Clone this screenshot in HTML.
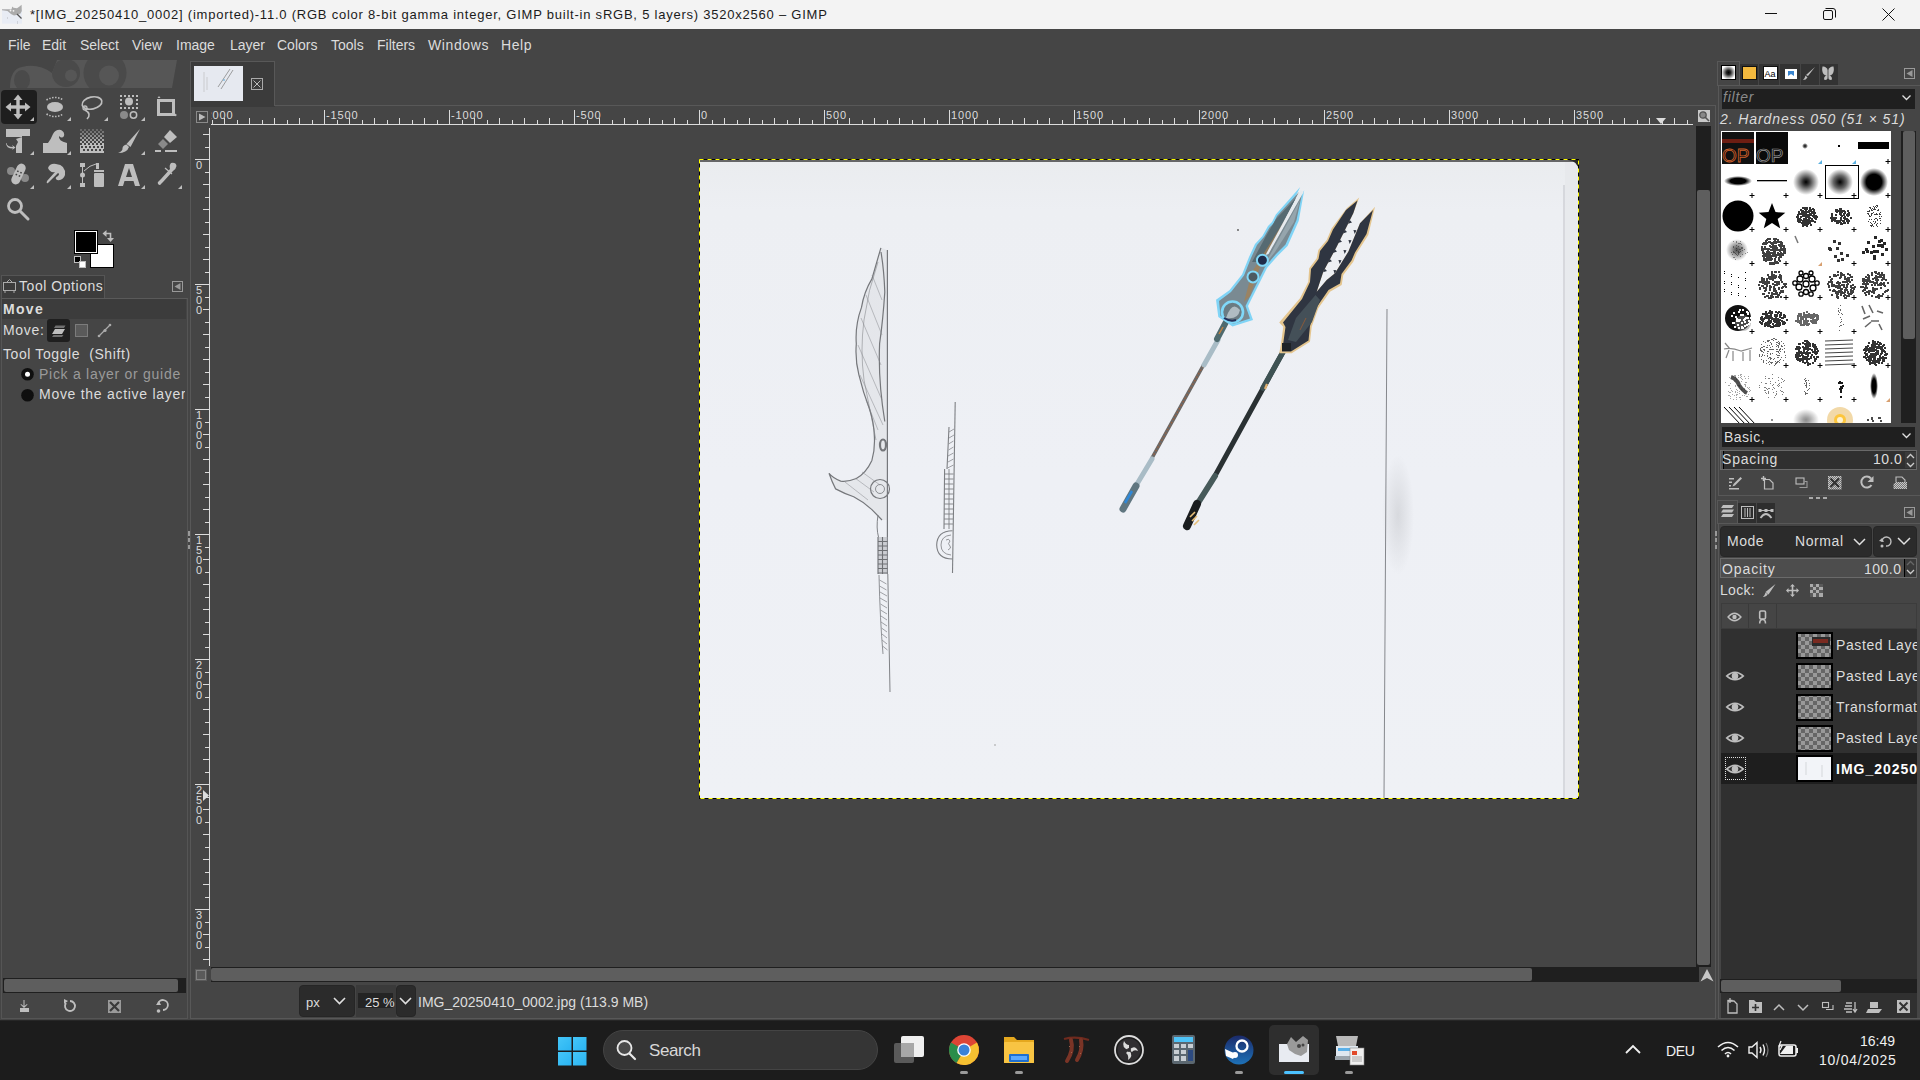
<!DOCTYPE html>
<html><head><meta charset="utf-8">
<style>
*{margin:0;padding:0;box-sizing:border-box}
html,body{width:1920px;height:1080px;overflow:hidden;background:#454545;font-family:"Liberation Sans",sans-serif;color:#dcdcdc}
.a{position:absolute}
.t{position:absolute;white-space:nowrap;line-height:1}
svg{position:absolute;overflow:visible}
.mi{position:absolute;top:38px;color:#dcdcdc;font-size:14px;line-height:1}
.ic{fill:#bebebe}
.ics{stroke:#bebebe;fill:none}
</style></head><body>
<!-- TITLE BAR -->
<div class="a" style="left:0;top:0;width:1920px;height:29px;background:#f3f3f3"></div>
<svg style="left:0;top:0" width="30" height="29" viewBox="0 0 30 29">
  <rect x="2" y="9.3" width="20" height="14.4" fill="#e8ecf4"/>
  <path d="M2 9.3 H11.5 L12.3 6.5 L13.5 7.8 L17 8.3 L19.5 6.5 L21.6 4.8 L21.8 11 L20.5 13.5 L17.5 14.8 L14 15.5 L11 14 L7.5 11 L2 10.2Z" fill="#ababab"/>
  <circle cx="10.5" cy="10.5" r="0.9" fill="#f3f3f3"/><circle cx="13.5" cy="10.8" r="0.9" fill="#f3f3f3"/>
  <path d="M17 14 L21.5 18.5" stroke="#555" stroke-width="1.3"/>
  <path d="M7.5 17 V19 M17.5 21 V24" stroke="#c8ccd2" stroke-width="0.8"/>
</svg>
<div class="t" style="left:30px;top:8px;font-size:13px;letter-spacing:0.77px;color:#1b1b1b">*[IMG_20250410_0002] (imported)-11.0 (RGB color 8-bit gamma integer, GIMP built-in sRGB, 5 layers) 3520x2560 – GIMP</div>
<div class="a" style="left:1765px;top:13px;width:12px;height:1px;background:#111"></div>
<svg style="left:1823px;top:8px" width="13" height="13" viewBox="0 0 13 13"><rect x="0.5" y="2.5" width="9" height="9" rx="1.5" fill="none" stroke="#111" stroke-width="1"/><path d="M2.5 0.5 H10 Q12.5 0.5 12.5 3 V9.5" fill="none" stroke="#111" stroke-width="1"/></svg>
<svg style="left:1882px;top:8px" width="13" height="13" viewBox="0 0 13 13"><path d="M0.5 0.5 L12.5 12.5 M12.5 0.5 L0.5 12.5" stroke="#111" stroke-width="1"/></svg>

<!-- MENU -->
<div class="mi" style="left:8px">File</div>
<div class="mi" style="left:42px">Edit</div>
<div class="mi" style="left:80px">Select</div>
<div class="mi" style="left:132px">View</div>
<div class="mi" style="left:176px">Image</div>
<div class="mi" style="left:230px">Layer</div>
<div class="mi" style="left:277px">Colors</div>
<div class="mi" style="left:331px">Tools</div>
<div class="mi" style="left:377px">Filters</div>
<div class="mi" style="left:428px;letter-spacing:0.6px">Windows</div>
<div class="mi" style="left:501px;letter-spacing:0.6px">Help</div>

<!-- LEFT TOOLBOX -->
<svg style="left:8px;top:59px" width="172" height="30" viewBox="0 0 172 30">
  <defs><clipPath id="wc"><path d="M2 29 Q2 10 14 8 Q30 4 44 14 L49 1 L169 1 L164 29 Z"/></clipPath></defs>
  <g clip-path="url(#wc)">
  <rect x="0" y="0" width="172" height="30" fill="#565656"/>
  <ellipse cx="14" cy="21" rx="8" ry="10" fill="#4a4a4a"/>
  <circle cx="58" cy="14" r="14" fill="#4a4a4a"/><circle cx="63" cy="16.5" r="6" fill="#565656"/>
  <circle cx="97" cy="14" r="21.5" fill="#4a4a4a"/><circle cx="101" cy="16.5" r="10" fill="#565656"/>
  </g>
</svg>
<div class="a" style="left:1px;top:90px;width:36px;height:34px;background:#1e1e1e;border-radius:4px"></div>
<svg style="left:0;top:0" width="188" height="300" viewBox="0 0 188 300">
 <g fill="#bebebe">
  <!-- move -->
  <rect x="16.3" y="99" width="3.4" height="16"/><rect x="10" y="105.3" width="16" height="3.4"/>
  <path d="M18 94.5 L22.5 100 H13.5Z M18 119.5 L22.5 114 H13.5Z M5.5 107 L11 102.5 V111.5Z M30.5 107 L25 102.5 V111.5Z"/>
  <path d="M30 121 L34 121 L34 117 Z"/>
  <!-- ellipse select -->
  <ellipse cx="55" cy="107" rx="8" ry="5"/>
  <path d="M46.5 100 Q55 95 63.5 100" fill="none" stroke="#bebebe" stroke-width="1.5" stroke-dasharray="1.5 1.5"/>
  <path d="M46.5 114 Q55 119 63.5 114" fill="none" stroke="#bebebe" stroke-width="1.5" stroke-dasharray="1.5 1.5"/>
  <path d="M67 121 L71 121 L71 117 Z"/>
  <!-- lasso -->
  <ellipse cx="92" cy="103" rx="10" ry="6" fill="none" stroke="#bebebe" stroke-width="1.6" transform="rotate(-12 92 103)"/>
  <circle cx="85" cy="108" r="2" fill="none" stroke="#bebebe" stroke-width="1.3"/>
  <path d="M85 110 Q92 114 87 119" fill="none" stroke="#bebebe" stroke-width="1.6"/>
  <path d="M104 121 L108 121 L108 117 Z"/>
  <!-- fuzzy select -->
  <path d="M120 95h2v2h-2zM124 95h2v2h-2zM128 95h2v2h-2zM132 95h2v2h-2zM136 95h2v2h-2zM120 99h2v2h-2zM136 99h2v2h-2zM120 103h2v2h-2zM136 103h2v2h-2zM120 107h2v2h-2zM124 107h2v2h-2zM128 107h2v2h-2zM132 107h2v2h-2zM136 107h2v2h-2z"/>
  <circle cx="129" cy="101.5" r="4"/>
  <circle cx="124" cy="115" r="4" fill="#8a8a8a"/>
  <circle cx="133.5" cy="115" r="3.2" fill="none" stroke="#bebebe" stroke-width="1.5"/>
  <path d="M141 121 L145 121 L145 117 Z"/>
  <!-- crop -->
  <path d="M157 99 H175 V116 H172 V102 H157 Z"/>
  <path d="M157 99 H160 V113 H175 V116 H157 Z"/>
  <path d="M157.5 98 L159 96 L160.5 98Z M175 113.5 L177 115 L175 116.5Z"/>
  <!-- unified transform -->
  <path d="M6 129 H30 V136 H22 V153 H16 V146 L18 142 L16 139 L22 137 H6 Z"/>
  <path d="M6.5 143 Q7 147 13 147 L12 145 L15.5 147.5 L12 150 L13 148.5 Q6 148.5 6 143Z"/>
  <path d="M30 155 L34 155 L34 151 Z"/>
  <!-- warp -->
  <path d="M43 153 V143 H48 Q51 139 53 134 Q56 129 61 130 Q65 132 64 136 Q62 139 59 136 Q58 141 67 143 V153 Z"/>
  <path d="M67 155 L71 155 L71 151 Z"/>
  <!-- paintbrush -->
  <path d="M140 129 L130.5 147 L126.5 144 Z"/>
  <path d="M126.5 144.5 L129 147 Q127 153 118 153 Q123 151 122.5 148 Q123 145 126.5 144.5Z"/>
  <path d="M141 155 L145 155 L145 151 Z"/>
  <!-- eraser -->
  <path d="M170 130 L177 137 L170 143 L164 137 Z"/>
  <path d="M163 139 L168 144 L163 149 L158 144 Z" fill="#8a8a8a"/>
  <rect x="155" y="150" width="6" height="2"/><rect x="165" y="150" width="12" height="2"/>
  <!-- heal -->
  <circle cx="11" cy="171" r="4" fill="#8a8a8a"/><circle cx="25" cy="178" r="4" fill="#8a8a8a"/>
  <rect x="14" y="163" width="9" height="22" rx="4.5" transform="rotate(25 18.5 174)"/><g fill="#454545" transform="rotate(25 18.5 174)"><rect x="16" y="171" width="1.6" height="1.6"/><rect x="19.4" y="171" width="1.6" height="1.6"/><rect x="16" y="174.6" width="1.6" height="1.6"/><rect x="19.4" y="174.6" width="1.6" height="1.6"/></g>
  <path d="M145 189 L145 185 L141 189Z M34 189 L34 185 L30 189Z M71 189 L71 185 L67 189Z M182 189 L182 185 L178 189Z"/>
  <!-- smudge -->
  <path d="M48 168 Q50 163 56 164 Q66 165 65 175 Q63 181 57 180 Q54 178 58 176 Q60 174 58 173 L48 183 Q46 184 47 181 L55 172 Q50 173 48 168Z"/>
  <!-- paths -->
  <rect x="80" y="163" width="5" height="4"/><rect x="80" y="183" width="5" height="4"/>
  <rect x="82" y="167" width="1" height="16"/><circle cx="82.5" cy="175" r="2.5"/>
  <path d="M84 171 Q90 165 96 164" fill="none" stroke="#bebebe" stroke-width="1"/>
  <rect x="96" y="163" width="3" height="6"/>
  <rect x="94" y="170" width="10" height="2"/>
  <rect x="94" y="173" width="10" height="14" rx="1"/>
  <!-- text A -->
  <path d="M125 164 H133 L140 186 H135 L133.5 181 H124.5 L123 186 H118 Z M126 177 H132 L129 168 Z" fill-rule="evenodd"/>
  <!-- color picker -->
  <path d="M171 163 Q176 162 176.5 166 Q176 169 173 171 L163 182 L161 184 Q160 186 158 184 Q157 182 159 181 L161 179 L170 169 Q169 165 171 163Z"/>
  <path d="M165 168 L172 174" stroke="#bebebe" stroke-width="1.2"/>
  <!-- zoom -->
  <circle cx="15" cy="206" r="6.5" fill="none" stroke="#bebebe" stroke-width="2.8"/>
  <path d="M20 211 L28 219" stroke="#bebebe" stroke-width="3" stroke-linecap="round"/>
 </g>
 <!-- gradient checker -->
 <g>
  <rect x="80" y="129" width="2" height="2" fill="#bebebe" fill-opacity="0.30"/><rect x="84" y="129" width="2" height="2" fill="#bebebe" fill-opacity="0.30"/><rect x="88" y="129" width="2" height="2" fill="#bebebe" fill-opacity="0.30"/><rect x="92" y="129" width="2" height="2" fill="#bebebe" fill-opacity="0.30"/><rect x="96" y="129" width="2" height="2" fill="#bebebe" fill-opacity="0.30"/><rect x="100" y="129" width="2" height="2" fill="#bebebe" fill-opacity="0.30"/><rect x="82" y="131" width="2" height="2" fill="#bebebe" fill-opacity="0.40"/><rect x="86" y="131" width="2" height="2" fill="#bebebe" fill-opacity="0.40"/><rect x="90" y="131" width="2" height="2" fill="#bebebe" fill-opacity="0.40"/><rect x="94" y="131" width="2" height="2" fill="#bebebe" fill-opacity="0.40"/><rect x="98" y="131" width="2" height="2" fill="#bebebe" fill-opacity="0.40"/><rect x="102" y="131" width="2" height="2" fill="#bebebe" fill-opacity="0.40"/><rect x="80" y="133" width="2" height="2" fill="#bebebe" fill-opacity="0.50"/><rect x="84" y="133" width="2" height="2" fill="#bebebe" fill-opacity="0.50"/><rect x="88" y="133" width="2" height="2" fill="#bebebe" fill-opacity="0.50"/><rect x="92" y="133" width="2" height="2" fill="#bebebe" fill-opacity="0.50"/><rect x="96" y="133" width="2" height="2" fill="#bebebe" fill-opacity="0.50"/><rect x="100" y="133" width="2" height="2" fill="#bebebe" fill-opacity="0.50"/><rect x="82" y="135" width="2" height="2" fill="#bebebe" fill-opacity="0.60"/><rect x="86" y="135" width="2" height="2" fill="#bebebe" fill-opacity="0.60"/><rect x="90" y="135" width="2" height="2" fill="#bebebe" fill-opacity="0.60"/><rect x="94" y="135" width="2" height="2" fill="#bebebe" fill-opacity="0.60"/><rect x="98" y="135" width="2" height="2" fill="#bebebe" fill-opacity="0.60"/><rect x="102" y="135" width="2" height="2" fill="#bebebe" fill-opacity="0.60"/><rect x="80" y="137" width="2" height="2" fill="#bebebe" fill-opacity="0.70"/><rect x="84" y="137" width="2" height="2" fill="#bebebe" fill-opacity="0.70"/><rect x="88" y="137" width="2" height="2" fill="#bebebe" fill-opacity="0.70"/><rect x="92" y="137" width="2" height="2" fill="#bebebe" fill-opacity="0.70"/><rect x="96" y="137" width="2" height="2" fill="#bebebe" fill-opacity="0.70"/><rect x="100" y="137" width="2" height="2" fill="#bebebe" fill-opacity="0.70"/><rect x="82" y="139" width="2" height="2" fill="#bebebe" fill-opacity="0.80"/><rect x="86" y="139" width="2" height="2" fill="#bebebe" fill-opacity="0.80"/><rect x="90" y="139" width="2" height="2" fill="#bebebe" fill-opacity="0.80"/><rect x="94" y="139" width="2" height="2" fill="#bebebe" fill-opacity="0.80"/><rect x="98" y="139" width="2" height="2" fill="#bebebe" fill-opacity="0.80"/><rect x="102" y="139" width="2" height="2" fill="#bebebe" fill-opacity="0.80"/><rect x="80" y="141" width="2" height="2" fill="#bebebe" fill-opacity="0.90"/><rect x="84" y="141" width="2" height="2" fill="#bebebe" fill-opacity="0.90"/><rect x="88" y="141" width="2" height="2" fill="#bebebe" fill-opacity="0.90"/><rect x="92" y="141" width="2" height="2" fill="#bebebe" fill-opacity="0.90"/><rect x="96" y="141" width="2" height="2" fill="#bebebe" fill-opacity="0.90"/><rect x="100" y="141" width="2" height="2" fill="#bebebe" fill-opacity="0.90"/><rect x="82" y="143" width="2" height="2" fill="#bebebe" fill-opacity="1.00"/><rect x="86" y="143" width="2" height="2" fill="#bebebe" fill-opacity="1.00"/><rect x="90" y="143" width="2" height="2" fill="#bebebe" fill-opacity="1.00"/><rect x="94" y="143" width="2" height="2" fill="#bebebe" fill-opacity="1.00"/><rect x="98" y="143" width="2" height="2" fill="#bebebe" fill-opacity="1.00"/><rect x="102" y="143" width="2" height="2" fill="#bebebe" fill-opacity="1.00"/><rect x="80" y="145" width="24" height="8" fill="#bebebe"/><path d="M81 146h2v2h-2zM83 149h2v2h-2zM85 146h2v2h-2zM87 149h2v2h-2zM89 146h2v2h-2zM91 149h2v2h-2zM93 146h2v2h-2zM95 149h2v2h-2zM97 146h2v2h-2zM99 149h2v2h-2zM101 146h2v2h-2zM103 149h2v2h-2z" fill="#454545"/>
 </g>
</svg>
<!-- FG/BG -->
<div class="a" style="left:90px;top:244px;width:24px;height:24px;background:#fff;border:1px solid #000"></div>
<div class="a" style="left:74px;top:230px;width:24px;height:24px;background:#000;border:1px solid #000;box-shadow:inset 0 0 0 1px #fff"></div>
<svg style="left:74px;top:228px" width="42" height="42" viewBox="74 228 42 42">
  <path d="M106 233.5 H110.5 V238" fill="none" stroke="#bebebe" stroke-width="1.6"/><path d="M102.5 233.5 L106.5 230 V237Z M110.5 242 L107 238 H114Z" fill="#bebebe"/>
  <rect x="74.5" y="256.5" width="6" height="6" fill="#000" stroke="#bebebe" stroke-width="1"/>
  <rect x="79.5" y="261.5" width="6" height="6" fill="#fff" stroke="#bebebe" stroke-width="1"/>
</svg>

<!-- Tool options tab -->
<div class="a" style="left:1px;top:275px;width:104px;height:24px;background:#3c3c3c;border:1px solid #555;border-bottom:none"></div>
<svg style="left:3px;top:279px" width="14" height="15" viewBox="0 0 14 15"><rect x="0.5" y="3.5" width="12" height="8" fill="none" stroke="#aaa"/><path d="M4 3 L6.5 0.5 L9 3 M2 12 V14 M11 12 V14" stroke="#aaa" fill="none"/></svg>
<div class="t" style="left:19px;top:279px;font-size:14px;letter-spacing:0.55px;color:#dcdcdc">Tool Options</div>
<svg style="left:172px;top:281px" width="11" height="11" viewBox="0 0 11 11"><rect x="0.5" y="0.5" width="10" height="10" fill="none" stroke="#999"/><path d="M2.5 5.5 L8.5 2 V9 Z" fill="#999"/></svg>
<div class="a" style="left:1px;top:298px;width:187px;height:721px;border:1px solid #555;border-top:1px solid #5a5a5a"></div>
<div class="a" style="left:2px;top:299px;width:184px;height:20px;background:#3c3c3c"></div>
<div class="t" style="left:3px;top:302px;font-size:14px;letter-spacing:1.3px;font-weight:bold;color:#dcdcdc">Move</div>
<div class="t" style="left:3px;top:323px;font-size:14px;letter-spacing:0.7px;color:#dcdcdc">Move:</div>
<div class="a" style="left:47px;top:319px;width:23px;height:23px;background:#1f1f1f;border-radius:3px"></div>
<svg style="left:47px;top:319px" width="70" height="23" viewBox="47 319 70 23">
  <path d="M52 334 L55 329 H65 L62 334 Z" fill="#bebebe"/>
  <path d="M54 328 L55.5 325.5 H65.5 L64 328Z M52 337 L53.5 335 H63.5 L62 337Z" fill="#707070"/>
  <rect x="75.5" y="324.5" width="12" height="12" fill="#5a5a5a" stroke="#aaa" stroke-dasharray="1 1"/>
  <path d="M99 336 L110 325" stroke="#aaa" stroke-width="1.2"/>
  <circle cx="99" cy="336" r="1.3" fill="#aaa"/><circle cx="105" cy="330.5" r="1.6" fill="#aaa"/><circle cx="110" cy="325" r="1.3" fill="#aaa"/>
</svg>
<div class="t" style="left:3px;top:347px;font-size:14px;letter-spacing:0.6px;color:#dcdcdc">Tool Toggle&nbsp; (Shift)</div>
<svg style="left:20px;top:367px" width="16" height="36" viewBox="20 367 16 36">
  <circle cx="27.5" cy="374.2" r="6.3" fill="#0f0f0f"/><circle cx="27.5" cy="374.2" r="2.5" fill="#fff"/>
  <circle cx="27.5" cy="395.3" r="6.3" fill="#0f0f0f"/>
</svg>
<div class="t" style="left:39px;top:367px;font-size:14px;letter-spacing:0.72px;color:#9a9a9a">Pick a layer or guide</div>
<div class="a" style="left:39px;top:385px;width:146px;height:20px;overflow:hidden"><div class="t" style="left:0;top:2px;font-size:14px;letter-spacing:0.72px;color:#dcdcdc">Move the active layer</div></div>

<!-- left panel bottom -->
<div class="a" style="left:3px;top:978px;width:183px;height:15px;background:#1f1f1f"></div>
<div class="a" style="left:4px;top:979px;width:174px;height:13px;background:#5e5e5e;border-radius:2px"></div>
<svg style="left:0;top:995px" width="188" height="22" viewBox="0 995 188 22">
  <g fill="#bebebe">
   <path d="M23.5 1000 V1006 L21 1004 L20.5 1004.5 L24 1008 L27.5 1004.5 L27 1004 L24.5 1006 V1000 Z"/>
   <path d="M20 1008 H29 V1012 H20Z"/>
  </g>
  <path d="M66 1003 A5 5 0 1 0 70 1001" fill="none" stroke="#bebebe" stroke-width="1.8"/>
  <path d="M64 999 L68 1001 L64 1004Z" fill="#bebebe"/>
  <rect x="108" y="1000" width="13" height="13" fill="#9a9a9a"/>
  <path d="M110 1002 L119 1011 M119 1002 L110 1011" stroke="#3a3a3a" stroke-width="2.2"/>
  <path d="M158 1004 A5 5 0 1 1 163 1010" fill="none" stroke="#bebebe" stroke-width="1.8"/>
  <path d="M156 1005 L159 1001 L161 1005Z" fill="#bebebe"/><circle cx="158.5" cy="1011" r="1.8" fill="#bebebe"/>
</svg>
<!-- CANVAS NOTEBOOK -->
<div class="a" style="left:190px;top:105px;width:1526px;height:914px;border:1px solid #585858"></div>
<div class="a" style="left:190px;top:61px;width:85px;height:46px;background:#3b3b3b;border:1px solid #585858;border-bottom:none"></div>
<div class="a" style="left:194px;top:66px;width:49px;height:35px;background:#e6e9f0"></div>
<svg style="left:194px;top:66px" width="49" height="35" viewBox="0 0 49 35">
  <path d="M10 6 V26 M13 11 V24" stroke="#bbb" stroke-width="0.6"/>
  <path d="M36 3 L24 21 M39 4 L27 23" stroke="#888" stroke-width="0.8"/>
  <circle cx="30" cy="14" r="0.8" fill="#4aa3d8"/>
</svg>
<svg style="left:251px;top:78px" width="12" height="12" viewBox="0 0 12 12"><rect x="0.5" y="0.5" width="11" height="11" fill="none" stroke="#aaa"/><path d="M2.5 2.5 L9.5 9.5 M9.5 2.5 L2.5 9.5" stroke="#bbb" stroke-width="1"/></svg>
<div class="a" style="left:191px;top:106px;width:84px;height:1px;background:#3b3b3b"></div>
<svg style="left:196px;top:111px" width="12" height="12" viewBox="0 0 12 12"><rect x="0.5" y="0.5" width="11" height="11" fill="none" stroke="#8a8a8a"/><path d="M3 2.5 L9.5 6 L3 9.5Z" fill="#bbb"/></svg>
<svg style="left:211px;top:106px;overflow:hidden" width="1483" height="20" viewBox="211 106 1483 20">
<rect x="210" y="124" width="1483" height="1" fill="#dcdcdc"/>
<path d="M212.5 120V124M224.5 118V124M237.5 120V124M249.5 118V124M262.5 120V124M274.5 118V124M287.5 120V124M299.5 118V124M312.5 120V124M324.5 110V124M337.5 120V124M349.5 118V124M362.5 120V124M374.5 118V124M387.5 120V124M399.5 118V124M412.5 120V124M424.5 118V124M437.5 120V124M449.5 110V124M462.5 120V124M474.5 118V124M487.5 120V124M499.5 118V124M512.5 120V124M524.5 118V124M537.5 120V124M549.5 118V124M562.5 120V124M574.5 110V124M587.5 120V124M599.5 118V124M612.5 120V124M624.5 118V124M637.5 120V124M649.5 118V124M662.5 120V124M674.5 118V124M687.5 120V124M699.5 110V124M712.5 120V124M724.5 118V124M737.5 120V124M749.5 118V124M762.5 120V124M774.5 118V124M787.5 120V124M799.5 118V124M812.5 120V124M824.5 110V124M837.5 120V124M849.5 118V124M862.5 120V124M874.5 118V124M887.5 120V124M899.5 118V124M912.5 120V124M924.5 118V124M937.5 120V124M949.5 110V124M962.5 120V124M974.5 118V124M987.5 120V124M999.5 118V124M1012.5 120V124M1024.5 118V124M1037.5 120V124M1049.5 118V124M1062.5 120V124M1074.5 110V124M1087.5 120V124M1099.5 118V124M1112.5 120V124M1124.5 118V124M1137.5 120V124M1149.5 118V124M1162.5 120V124M1174.5 118V124M1187.5 120V124M1199.5 110V124M1212.5 120V124M1224.5 118V124M1237.5 120V124M1249.5 118V124M1262.5 120V124M1274.5 118V124M1287.5 120V124M1299.5 118V124M1312.5 120V124M1324.5 110V124M1337.5 120V124M1349.5 118V124M1362.5 120V124M1374.5 118V124M1387.5 120V124M1399.5 118V124M1412.5 120V124M1424.5 118V124M1437.5 120V124M1449.5 110V124M1462.5 120V124M1474.5 118V124M1487.5 120V124M1499.5 118V124M1512.5 120V124M1524.5 118V124M1537.5 120V124M1549.5 118V124M1562.5 120V124M1574.5 110V124M1587.5 120V124M1599.5 118V124M1612.5 120V124M1624.5 118V124M1637.5 120V124M1649.5 118V124M1662.5 120V124M1674.5 118V124M1687.5 120V124" stroke="#dcdcdc" stroke-width="1"/>
<text x="201.0" y="119" font-size="11" letter-spacing="0.9" fill="#dcdcdc" font-family="Liberation Sans">-2000</text>
<text x="326.0" y="119" font-size="11" letter-spacing="0.9" fill="#dcdcdc" font-family="Liberation Sans">-1500</text>
<text x="451.0" y="119" font-size="11" letter-spacing="0.9" fill="#dcdcdc" font-family="Liberation Sans">-1000</text>
<text x="576.0" y="119" font-size="11" letter-spacing="0.9" fill="#dcdcdc" font-family="Liberation Sans">-500</text>
<text x="701.0" y="119" font-size="11" letter-spacing="0.9" fill="#dcdcdc" font-family="Liberation Sans">0</text>
<text x="826.0" y="119" font-size="11" letter-spacing="0.9" fill="#dcdcdc" font-family="Liberation Sans">500</text>
<text x="951.0" y="119" font-size="11" letter-spacing="0.9" fill="#dcdcdc" font-family="Liberation Sans">1000</text>
<text x="1076.0" y="119" font-size="11" letter-spacing="0.9" fill="#dcdcdc" font-family="Liberation Sans">1500</text>
<text x="1201.0" y="119" font-size="11" letter-spacing="0.9" fill="#dcdcdc" font-family="Liberation Sans">2000</text>
<text x="1326.0" y="119" font-size="11" letter-spacing="0.9" fill="#dcdcdc" font-family="Liberation Sans">2500</text>
<text x="1451.0" y="119" font-size="11" letter-spacing="0.9" fill="#dcdcdc" font-family="Liberation Sans">3000</text>
<text x="1576.0" y="119" font-size="11" letter-spacing="0.9" fill="#dcdcdc" font-family="Liberation Sans">3500</text>
<path d="M1656 118 L1666 118 L1661 124Z" fill="#dcdcdc"/>
</svg>
<svg style="left:191px;top:126px;overflow:hidden" width="19" height="840" viewBox="191 126 19 840">
<rect x="209" y="128" width="1" height="838" fill="#dcdcdc"/>
<path d="M203 134.5H209M205 147.5H209M195 159.5H209M205 172.5H209M203 184.5H209M205 197.5H209M203 209.5H209M205 222.5H209M203 234.5H209M205 247.5H209M203 259.5H209M205 272.5H209M195 284.5H209M205 297.5H209M203 309.5H209M205 322.5H209M203 334.5H209M205 347.5H209M203 359.5H209M205 372.5H209M203 384.5H209M205 397.5H209M195 409.5H209M205 422.5H209M203 434.5H209M205 447.5H209M203 459.5H209M205 472.5H209M203 484.5H209M205 497.5H209M203 509.5H209M205 522.5H209M195 534.5H209M205 547.5H209M203 559.5H209M205 572.5H209M203 584.5H209M205 597.5H209M203 609.5H209M205 622.5H209M203 634.5H209M205 647.5H209M195 659.5H209M205 672.5H209M203 684.5H209M205 697.5H209M203 709.5H209M205 722.5H209M203 734.5H209M205 747.5H209M203 759.5H209M205 772.5H209M195 784.5H209M205 797.5H209M203 809.5H209M205 822.5H209M203 834.5H209M205 847.5H209M203 859.5H209M205 872.5H209M203 884.5H209M205 897.5H209M195 909.5H209M205 922.5H209M203 934.5H209M205 947.5H209M203 959.5H209" stroke="#dcdcdc" stroke-width="1"/>
<text x="196" y="169.0" font-size="11" fill="#dcdcdc" font-family="Liberation Sans">0</text>
<text x="196" y="294.0" font-size="11" fill="#dcdcdc" font-family="Liberation Sans">5</text>
<text x="196" y="304.0" font-size="11" fill="#dcdcdc" font-family="Liberation Sans">0</text>
<text x="196" y="314.0" font-size="11" fill="#dcdcdc" font-family="Liberation Sans">0</text>
<text x="196" y="419.0" font-size="11" fill="#dcdcdc" font-family="Liberation Sans">1</text>
<text x="196" y="429.0" font-size="11" fill="#dcdcdc" font-family="Liberation Sans">0</text>
<text x="196" y="439.0" font-size="11" fill="#dcdcdc" font-family="Liberation Sans">0</text>
<text x="196" y="449.0" font-size="11" fill="#dcdcdc" font-family="Liberation Sans">0</text>
<text x="196" y="544.0" font-size="11" fill="#dcdcdc" font-family="Liberation Sans">1</text>
<text x="196" y="554.0" font-size="11" fill="#dcdcdc" font-family="Liberation Sans">5</text>
<text x="196" y="564.0" font-size="11" fill="#dcdcdc" font-family="Liberation Sans">0</text>
<text x="196" y="574.0" font-size="11" fill="#dcdcdc" font-family="Liberation Sans">0</text>
<text x="196" y="669.0" font-size="11" fill="#dcdcdc" font-family="Liberation Sans">2</text>
<text x="196" y="679.0" font-size="11" fill="#dcdcdc" font-family="Liberation Sans">0</text>
<text x="196" y="689.0" font-size="11" fill="#dcdcdc" font-family="Liberation Sans">0</text>
<text x="196" y="699.0" font-size="11" fill="#dcdcdc" font-family="Liberation Sans">0</text>
<text x="196" y="794.0" font-size="11" fill="#dcdcdc" font-family="Liberation Sans">2</text>
<text x="196" y="804.0" font-size="11" fill="#dcdcdc" font-family="Liberation Sans">5</text>
<text x="196" y="814.0" font-size="11" fill="#dcdcdc" font-family="Liberation Sans">0</text>
<text x="196" y="824.0" font-size="11" fill="#dcdcdc" font-family="Liberation Sans">0</text>
<text x="196" y="919.0" font-size="11" fill="#dcdcdc" font-family="Liberation Sans">3</text>
<text x="196" y="929.0" font-size="11" fill="#dcdcdc" font-family="Liberation Sans">0</text>
<text x="196" y="939.0" font-size="11" fill="#dcdcdc" font-family="Liberation Sans">0</text>
<text x="196" y="949.0" font-size="11" fill="#dcdcdc" font-family="Liberation Sans">0</text>
<path d="M203 790 L203 801 L209 795.5Z" fill="#dcdcdc"/>
</svg><!-- zoom button -->
<div class="a" style="left:1698px;top:110px;width:12px;height:12px;background:#c8c8c8"></div>
<svg style="left:1698px;top:110px" width="12" height="12" viewBox="0 0 12 12"><circle cx="5" cy="5" r="3.2" fill="#888" stroke="#555" stroke-width="1.3"/><path d="M7.5 7.5 L11 11" stroke="#555" stroke-width="1.6"/></svg>
<!-- v scrollbar -->
<div class="a" style="left:1696px;top:126px;width:15px;height:841px;background:#1f1f1f"></div>
<div class="a" style="left:1697px;top:190px;width:13px;height:775px;background:#5e5e5e;border-radius:2px"></div>
<!-- h scrollbar -->
<div class="a" style="left:211px;top:967px;width:488px;height:15px;background:#1f1f1f"></div>
<div class="a" style="left:699px;top:967px;width:1000px;height:15px;background:#1f1f1f"></div>
<div class="a" style="left:211px;top:968px;width:1321px;height:13px;background:#5e5e5e;border-radius:2px"></div>
<svg style="left:195px;top:969px" width="12" height="12" viewBox="0 0 12 12"><rect x="0" y="0" width="12" height="12" fill="#5a5a5a"/><rect x="1.5" y="1.5" width="9" height="9" fill="none" stroke="#aaa" stroke-dasharray="1 1"/></svg>
<svg style="left:1700px;top:969px" width="14" height="13" viewBox="0 0 14 13"><path d="M7 0 L13.5 12.5 L7 9 L0.5 12.5Z" fill="#c8c8c8"/></svg>
<!-- status bar -->
<div class="a" style="left:299px;top:985px;width:56px;height:32px;background:#2b2b2b;border-radius:4px;border:1px solid #262626"></div>
<div class="t" style="left:306px;top:996px;font-size:13px;color:#dcdcdc">px</div>
<svg style="left:333px;top:997px" width="13" height="8" viewBox="0 0 13 8"><path d="M1 1 L6.5 6.5 L12 1" fill="none" stroke="#e0e0e0" stroke-width="1.6"/></svg>
<div class="a" style="left:356px;top:985px;width:40px;height:32px;background:#3a3a3a"></div>
<div class="a" style="left:358px;top:993px;width:35px;height:15px;background:#242424"></div>
<div class="t" style="left:365px;top:996px;font-size:13px;color:#dcdcdc">25 %</div>
<div class="a" style="left:396px;top:985px;width:20px;height:32px;background:#2b2b2b;border-radius:4px;border:1px solid #262626"></div>
<svg style="left:399px;top:997px" width="13" height="8" viewBox="0 0 13 8"><path d="M1 1 L6.5 6.5 L12 1" fill="none" stroke="#e0e0e0" stroke-width="1.6"/></svg>
<div class="t" style="left:418px;top:995px;font-size:14px;color:#dcdcdc">IMG_20250410_0002.jpg (113.9 MB)</div>
<!-- IMAGE -->
<svg style="left:699px;top:159px" width="881" height="641" viewBox="699 159 881 641">
 <defs>
  <linearGradient id="pg" x1="0" y1="0" x2="0" y2="1">
   <stop offset="0" stop-color="#eaecef"/><stop offset="0.08" stop-color="#edeff3"/><stop offset="0.5" stop-color="#eef0f5"/><stop offset="1" stop-color="#eff1f5"/>
  </linearGradient>
 </defs>
 <rect x="700" y="160" width="879" height="639" fill="url(#pg)"/>
 <rect x="700" y="160" width="878" height="2" fill="#3a3a3a" opacity="0.75"/>
 <path d="M1564 185 V798" stroke="#cfd1d6" stroke-width="1.5"/>
 <path d="M1384 798 L1387 309" stroke="#85878c" stroke-width="1"/>
 <defs><radialGradient id="smg"><stop offset="0" stop-color="#9a9ca0" stop-opacity="0.45"/><stop offset="1" stop-color="#9a9ca0" stop-opacity="0"/></radialGradient></defs><ellipse cx="1398" cy="515" rx="16" ry="60" fill="url(#smg)" opacity="0.6"/><rect x="1565" y="162" width="13" height="636" fill="#e4e6ea" opacity="0.6"/>
 <!-- sketch 1 blade -->
 <path d="M880.9 247.8 L871.9 278.9 Q864 292 861.5 307.4 Q855 325 856.3 343.7 Q855 360 858.9 374.8 Q863 392 869.3 408.5 Q874 422 874.4 437 Q875 450 871.9 460.4 Q866 473 856.3 478.5 Q848 482 840.7 481.1 Q833 478 829 473.3 Q832 482 835.6 488.9 Q845 494 853.7 496.7 Q864 502 871.9 509.6 L882 520 L887 520 L887 250 Z" fill="#d9dbdf" opacity="0.45"/>
 <g fill="none" stroke="#75777b" stroke-width="1.2">
  <path d="M887.4 250 V574"/>
  <path d="M880.9 247.8 L871.9 278.9 Q864 292 861.5 307.4 Q855 325 856.3 343.7 Q855 360 858.9 374.8 Q863 392 869.3 408.5 Q874 422 874.4 437 Q875 450 871.9 460.4 Q866 473 856.3 478.5 Q848 482 840.7 481.1 Q833 478 829 473.3 Q832 482 835.6 488.9 Q845 494 853.7 496.7 Q864 502 871.9 509.6 L882 520"/>
  <path d="M881 252 Q884 270 884.8 291.9 Q883 320 879.6 343.7 Q878 380 884.8 421.5"/>
  <path d="M878 262 Q868 290 864 320 Q860 350 864 380 Q870 410 876 440" stroke-width="0.7" opacity="0.7"/>
  <ellipse cx="883" cy="445" rx="3" ry="5.5" stroke-width="2.2"/>
  <circle cx="880" cy="489" r="9.5"/><circle cx="880" cy="489" r="4.5" stroke-width="0.8"/>
     </g>
 <g stroke="#85878b" stroke-width="0.6" opacity="0.8">
  <path d="M872 275 L882 300 M866 295 L882 335 M861 318 L881 365 M858 345 L882 400 M860 375 L883 425 M866 400 L878 430 M845 482 L868 500 M855 478 L874 492 M862 472 L880 485"/>
 </g>
 <path d="M878 515 Q876 528 878.5 537" fill="none" stroke="#808286" stroke-width="1"/>
 <rect x="878" y="537" width="9.5" height="37" fill="#b4b6ba" opacity="0.6"/>
 <path d="M878 537 V574 M882.5 537 V574 M878 541.5h9.5M878 546h9.5M878 550.5h9.5M878 555h9.5M878 559.5h9.5M878 564h9.5M878 568.5h9.5M878 573h9.5" stroke="#6e7074" stroke-width="1.1" fill="none"/>
 <path d="M879 575 Q880 620 883 654" fill="none" stroke="#85878b" stroke-width="0.9"/>
 <path d="M879.5 580l7 4M879.5 586l7 4M880 592l7 4M880 598l7 4M880.5 604l6.5 4M880.5 610l6.5 4M881 616l6 4M881 622l6 4M881.5 628l5.5 4M882 634l5 4M882 640l5 4M882.5 646l5 4" stroke="#8a8c90" stroke-width="0.8"/>
 <path d="M887.8 574 L890 692" fill="none" stroke="#808286" stroke-width="1"/>
 <!-- sketch 2 -->
 <g fill="none" stroke="#7d7f83" stroke-width="1.1">
  <path d="M955.2 402 L952.5 573"/>
  <path d="M949 427 L947 469 M944.6 469 L944 529"/>
  <path d="M952.5 530.7 Q937 531 936.7 545 Q937 559 952.5 559"/>
  <path d="M951 535 Q941 536 941 545 Q941 554 951 555" stroke-width="0.8"/>
  <path d="M946 540 q3 -2 4 1 q-3 3 0 5 q2 2 -2 4" stroke-width="0.8"/>
 </g>
 <path d="M949 432l5 -3M949 438l5 -3M948.5 444l5 -3M948.5 450l5 -3M948 456l5.5 -3M948 462l5.5 -3M947.5 468l6 -3" stroke="#8a8c90" stroke-width="0.8"/>
 <path d="M944.5 474h9M944.5 479h9M944.5 484h9M944.5 489h9M944.5 494h9M944.3 499h9M944.3 504h9M944.2 509h9M944.2 514h9M944.1 519h9M944 524h9M949 469V529" stroke="#7d7f83" stroke-width="0.9"/>
 <circle cx="995" cy="745" r="0.8" fill="#999"/>
 <circle cx="1238" cy="230" r="0.9" fill="#555"/>
 <!-- BLUE SPEAR -->
 <g>
  <path d="M1203 366 L1152 458" stroke="#6b6866" stroke-width="3.6" stroke-linecap="round"/>
  <path d="M1203 366 L1152 458" stroke="#9a6040" stroke-width="1.4" stroke-dasharray="1.5 2.5"/>
  <path d="M1218 340 L1204 365" stroke="#a9bcc6" stroke-width="5" stroke-linecap="round"/>
  <path d="M1152 459 L1137 484" stroke="#a9bcc6" stroke-width="5" stroke-linecap="round"/>
  <path d="M1136 486 L1123 509" stroke="#607680" stroke-width="7" stroke-linecap="round"/>
  <path d="M1132 491 L1125 503" stroke="#2f88d8" stroke-width="2.5"/>
  <path d="M1226 322 L1217 339" stroke="#4f6a6e" stroke-width="6" stroke-linecap="round"/><path d="M1223 327 L1219 334" stroke="#c08040" stroke-width="1.5"/>
  <path d="M1300.2 187.1 L1275.8 214.6 L1272 222 L1268 226 L1262.4 235.9 L1255 244 L1249 257 L1242 274.5 L1229.4 290.2 L1216 299.7 L1218.3 317 L1232.5 326.5 L1253 320 L1248 306 L1256 290 L1267 268 L1278 255.6 L1287.6 246 L1298.7 221 L1304.2 190.2 L1266 258 Z" fill="#80d4f6"/>
  <path d="M1299 192 L1277 216 L1273.5 223.5 L1269.5 227.5 L1264 237 L1257 245 L1251 258 L1244 275.5 L1231 292 L1219 301 L1220.5 316 L1233 324 L1250 318.5 L1245.5 306 L1254 289 L1265 267 L1276 254 L1285.5 244.5 L1296.5 220 L1302 194 L1266 257 Z" fill="#7a8a92"/>
  <path d="M1296 198 L1267 252 L1260 262 L1252 262 L1266 236 L1276 219 Z" fill="#566a72"/>
  <path d="M1293 207 L1264 258 L1258 272 L1250 296 L1244 302 L1252 272 Z" fill="#a88050" opacity="0.7"/>
  <path d="M1300 200 L1270 255 L1264 266 L1275 252 L1294 222Z" fill="#95a5ad"/>
  <path d="M1300.8 190 L1303.6 192 L1268.5 254 L1265.5 255Z" fill="#e6eaee"/>
  <circle cx="1232.5" cy="312" r="10.5" fill="#6b7b82" stroke="#80d8f8" stroke-width="2.6"/>
  <path d="M1226 318 Q1232 300 1240 310 Q1238 320 1226 318Z" fill="#b0bcc2"/>
  <path d="M1224 318 Q1230 322 1236 320" stroke="#24305a" stroke-width="2" fill="none"/>
  <circle cx="1262.4" cy="260.3" r="5.5" fill="#1f2c4a" stroke="#80d8f8" stroke-width="2"/>
  <circle cx="1253" cy="276.9" r="5.5" fill="#4d5a60" stroke="#80d8f8" stroke-width="2"/>
 </g>
 <!-- DARK SPEAR -->
 <g>
  <path d="M1283 352 L1216 474" stroke="#2a3133" stroke-width="5" stroke-linecap="round"/>
  <path d="M1283 352 L1263 388" stroke="#3e5253" stroke-width="5.5" stroke-linecap="round"/>
  <path d="M1215 476 L1198 503" stroke="#475a5a" stroke-width="6" stroke-linecap="round"/>
  <path d="M1197 504 L1187 526" stroke="#1a1d1f" stroke-width="8" stroke-linecap="round"/>
  <path d="M1190 517 L1195 512 M1192 521 L1197 516 M1194 525 L1199 520" stroke="#e8c07a" stroke-width="1.6"/>
  <path d="M1265 389 L1267 384" stroke="#e0b070" stroke-width="2.2"/>
  <path d="M1359.2 197.5 L1346.7 208.3 L1331.7 228.3 L1326.7 240 L1318.3 250 L1316.7 258.3 L1309.2 268.3 L1308.3 281.7 L1300 298.3 L1279.2 322.5 L1283.3 326.7 L1280.8 345 L1279.2 353.3 L1291.7 353.3 L1310 341.7 L1311.7 326.7 L1318.3 308.3 L1330 291.7 L1341.7 285 L1343.3 275 L1353.3 261.7 L1356.7 253.3 L1368.3 235 L1375 206.7 L1360 223.3 L1348.3 251.7 L1335 273.3 L1326.7 280 L1316.7 291.7 L1323.3 271.7 L1336.7 246.7 L1353.3 213.3 Z" fill="#e4c58e"/>
  <path d="M1357.5 200.5 L1346 210 L1333 229.5 L1328 241 L1320 251 L1318.5 259 L1311 269 L1310 282 L1302 299 L1283 322.5 L1285.5 327 L1283 345 L1282 351.5 L1291 351.5 L1308.5 340.5 L1310 326 L1316.5 307.5 L1328.5 290 L1340 283.5 L1341.5 274 L1351.5 260.5 L1355 252.5 L1366.5 234 L1373 210 L1360 223.3 L1348.3 251.7 L1335 273.3 L1326.7 280 L1316.7 291.7 L1323.3 271.7 L1336.7 246.7 L1353.3 213.3 Z" fill="#2f3541"/>
  <path d="M1349.8 220.1L1348.0 223.7L1352.0 222.4ZM1344.8 229.8L1343.0 233.4L1347.0 232.1ZM1339.8 239.6L1338.0 243.1L1342.0 241.8ZM1334.8 249.3L1333.0 252.9L1337.0 251.6ZM1329.8 259.0L1328.0 262.6L1332.0 261.3ZM1324.8 268.8L1323.0 272.3L1327.0 271.0ZM1356.5 230.3L1354.7 233.9L1353.4 229.9ZM1351.5 240.3L1349.7 243.9L1348.4 239.9ZM1346.5 250.3L1344.7 253.9L1343.4 249.9ZM1341.5 260.3L1339.7 263.9L1338.4 259.9ZM1336.5 270.3L1334.7 273.9L1333.4 269.9Z" fill="#2f3541"/>
  <path d="M1315.5 295 L1296 318 L1288 340 L1296 342 L1312 322 L1320 300Z" fill="#445058"/>
  <path d="M1300 330 L1306 318" stroke="#8a5a3a" stroke-width="1"/>
  <rect x="1282" y="343" width="9" height="8" fill="#1e2226"/>
 </g>
 <path d="M1568 160 H1579 V171 Q1578 161 1568 160Z" fill="#2a2a2a"/>
 <!-- dashed border -->
 <rect x="699.5" y="159.5" width="879" height="639" fill="none" stroke="#000" stroke-width="1"/>
 <rect x="699.5" y="159.5" width="879" height="639" fill="none" stroke="#ffff00" stroke-width="1" stroke-dasharray="4 4"/>
</svg>
<!-- RIGHT DOCK: BRUSHES -->
<div class="a" style="left:1717px;top:61px;width:23px;height:25px;background:#454545;border:1px solid #585858;border-bottom:none"></div>
<div class="a" style="left:1740px;top:64px;width:98px;height:21px;background:#333"></div>
<div class="a" style="left:1758px;top:64px;width:1px;height:21px;background:#454545"></div>
<div class="a" style="left:1779px;top:64px;width:1px;height:21px;background:#454545"></div>
<div class="a" style="left:1800px;top:64px;width:1px;height:21px;background:#454545"></div>
<div class="a" style="left:1819px;top:64px;width:1px;height:21px;background:#454545"></div>
<svg style="left:1717px;top:61px" width="130" height="25" viewBox="1717 61 130 25">
  <defs><radialGradient id="tg"><stop offset="0" stop-color="#000"/><stop offset="0.3" stop-color="#222"/><stop offset="1" stop-color="#fff"/></radialGradient></defs>
  <rect x="1721.5" y="65.5" width="14" height="14" fill="url(#tg)" stroke="#000"/>
  <rect x="1742.5" y="66.5" width="14" height="13" fill="#f3b93e" stroke="#111"/>
  <rect x="1763.5" y="66.5" width="14" height="13" fill="#fff" stroke="#111"/>
  <text x="1764.5" y="77" font-size="9" fill="#000" font-family="Liberation Sans">Aa</text>
  <rect x="1785" y="69" width="12" height="10" fill="#fff"/><path d="M1788 71 H1794 V76 L1791 74 L1788 76Z" fill="#3a86d0"/>
  <path d="M1815 67 L1808 76 L1806 75Z M1805.5 75.5 L1807.5 77.5 Q1806 80 1803 80 Q1805 78 1805.5 75.5Z" fill="#bebebe"/>
  <path d="M1828 70 Q1826 66 1822.5 66.5 Q1821.5 71 1823.5 74 Q1825 75.5 1826.5 75.5 Q1823 77 1824.5 80 Q1827 80.5 1828 77.5 Q1829 80.5 1831.5 80 Q1833 77 1829.5 75.5 Q1831 75.5 1832.5 74 Q1834.5 71 1833.5 66.5 Q1830 66 1828 70Z" fill="#bebebe"/><path d="M1828 69 V78" stroke="#333" stroke-width="0.8"/>
</svg>
<svg style="left:1904px;top:68px" width="11" height="11" viewBox="0 0 11 11"><rect x="0.5" y="0.5" width="10" height="10" fill="none" stroke="#999"/><path d="M2.5 5.5 L8.5 2 V9 Z" fill="#999"/></svg>
<div class="a" style="left:1718px;top:85px;width:202px;height:411px;border:1px solid #585858;border-right:none"></div>
<div class="a" style="left:1722px;top:89px;width:193px;height:20px;background:#1f1f1f"></div>
<div class="t" style="left:1723px;top:90px;font-size:14px;letter-spacing:0.8px;font-style:italic;color:#8a8a8a">filter</div>
<svg style="left:1902px;top:95px" width="9" height="6" viewBox="0 0 9 6"><path d="M0.5 0.5 L4.5 4.5 L8.5 0.5" fill="none" stroke="#e0e0e0" stroke-width="1.3"/></svg>
<div class="t" style="left:1720px;top:112px;font-size:14px;letter-spacing:0.9px;font-style:italic;color:#dcdcdc">2. Hardness 050 (51 × 51)</div>
<svg style="left:1721px;top:131px;overflow:hidden" width="170" height="292" viewBox="1721 131 170 292">
<defs><radialGradient id="b1"><stop offset="0" stop-color="#000"/><stop offset="0.25" stop-color="#000" stop-opacity="0.8"/><stop offset="1" stop-color="#000" stop-opacity="0"/></radialGradient><radialGradient id="b2"><stop offset="0" stop-color="#000"/><stop offset="0.5" stop-color="#000" stop-opacity="0.6"/><stop offset="1" stop-color="#000" stop-opacity="0"/></radialGradient><radialGradient id="b3"><stop offset="0" stop-color="#000"/><stop offset="0.55" stop-color="#000"/><stop offset="1" stop-color="#000" stop-opacity="0"/></radialGradient></defs>
<rect x="1721" y="131" width="170" height="292" fill="#fff"/>
<rect x="1722" y="132" width="32" height="32" fill="#111"/><rect x="1722" y="139" width="32" height="4" fill="#6d1d12"/><text x="1722" y="162" font-size="19" fill="none" stroke="#d0602a" stroke-width="0.8" font-family="Liberation Sans">OP</text>
<rect x="1756" y="132" width="32" height="32" fill="#0a0a0a"/><text x="1756" y="162" font-size="19" fill="none" stroke="#999" stroke-width="0.7" font-family="Liberation Sans">OP</text>
<circle cx="1805" cy="146" r="3" fill="url(#b2)"/>
<rect x="1838" y="145" width="2" height="2" fill="#000"/>
<rect x="1858" y="142" width="31" height="7" fill="#000"/>
<ellipse cx="1738" cy="181" rx="14" ry="5" fill="url(#b3)"/>
<rect x="1757" y="180" width="30" height="1.3" fill="#000"/>
<circle cx="1806" cy="182" r="13" fill="url(#b1)"/>
<circle cx="1840" cy="182" r="13" fill="url(#b2)"/><rect x="1825.5" y="165.5" width="33" height="33" fill="none" stroke="#000" stroke-width="1"/>
<circle cx="1874" cy="182" r="14" fill="url(#b3)"/>
<circle cx="1738" cy="216" r="15.5" fill="#000"/>
<polygon points="1772.0,203.0 1775.5,212.1 1785.3,212.7 1777.7,218.9 1780.2,228.3 1772.0,223.0 1763.8,228.3 1766.3,218.9 1758.7,212.7 1768.5,212.1" fill="#000"/>
<path d="M1807 223h2v2h-2zM1801 222h2v2h-2zM1804 214h2v2h-2zM1815 217h2v2h-2zM1806 221h2v2h-2zM1813 216h2v2h-2zM1810 210h2v2h-2zM1804 213h2v2h-2zM1800 209h2v2h-2zM1797 215h2v2h-2zM1805 214h2v2h-2zM1806 208h2v2h-2zM1805 218h2v2h-2zM1811 211h2v2h-2zM1804 207h2v2h-2zM1804 207h2v2h-2zM1799 221h2v2h-2zM1797 219h2v2h-2zM1808 214h2v2h-2zM1809 220h2v2h-2zM1812 215h2v2h-2zM1802 212h2v2h-2zM1800 216h2v2h-2zM1801 222h2v2h-2zM1798 211h2v2h-2zM1802 207h2v2h-2zM1812 208h2v2h-2zM1804 212h2v2h-2zM1812 208h2v2h-2zM1812 212h2v2h-2zM1805 212h2v2h-2zM1810 209h2v2h-2zM1805 218h2v2h-2zM1812 208h2v2h-2zM1814 221h2v2h-2zM1803 218h2v2h-2zM1804 224h2v2h-2zM1807 214h2v2h-2zM1804 215h2v2h-2zM1805 210h2v2h-2zM1813 209h2v2h-2zM1796 216h2v2h-2zM1805 219h2v2h-2zM1805 215h2v2h-2zM1808 222h2v2h-2zM1803 213h2v2h-2zM1815 218h2v2h-2zM1802 225h2v2h-2zM1811 212h2v2h-2zM1799 218h2v2h-2zM1801 210h2v2h-2zM1799 213h2v2h-2zM1813 213h2v2h-2zM1798 220h2v2h-2zM1806 221h2v2h-2zM1813 215h2v2h-2zM1805 216h2v2h-2zM1799 220h2v2h-2zM1814 217h2v2h-2zM1804 214h2v2h-2zM1801 211h2v2h-2zM1803 211h2v2h-2zM1804 208h2v2h-2zM1808 216h2v2h-2zM1802 207h2v2h-2zM1806 223h2v2h-2zM1801 213h2v2h-2zM1802 220h2v2h-2zM1801 222h2v2h-2zM1804 222h2v2h-2zM1806 214h2v2h-2zM1798 212h2v2h-2zM1804 220h2v2h-2zM1808 211h2v2h-2zM1809 222h2v2h-2zM1805 213h2v2h-2zM1803 221h2v2h-2zM1809 210h2v2h-2zM1809 213h2v2h-2zM1802 223h2v2h-2zM1811 212h2v2h-2zM1807 219h2v2h-2zM1802 215h2v2h-2zM1809 207h2v2h-2zM1808 221h2v2h-2zM1809 208h2v2h-2zM1808 210h2v2h-2zM1810 220h2v2h-2zM1807 211h2v2h-2zM1802 221h2v2h-2zM1800 219h2v2h-2zM1809 214h2v2h-2zM1816 216h2v2h-2zM1813 209h2v2h-2zM1797 220h2v2h-2zM1810 214h2v2h-2zM1806 207h2v2h-2zM1802 210h2v2h-2zM1805 222h2v2h-2zM1806 219h2v2h-2zM1801 213h2v2h-2zM1807 214h2v2h-2zM1813 211h2v2h-2zM1814 212h2v2h-2zM1812 212h2v2h-2zM1815 217h2v2h-2zM1809 221h2v2h-2zM1802 210h2v2h-2zM1798 221h2v2h-2zM1802 212h2v2h-2zM1806 225h2v2h-2zM1797 217h2v2h-2zM1803 220h2v2h-2zM1797 214h2v2h-2zM1810 224h2v2h-2zM1814 212h2v2h-2zM1806 215h2v2h-2zM1800 209h2v2h-2zM1811 218h2v2h-2zM1805 223h2v2h-2zM1800 219h2v2h-2zM1806 216h2v2h-2zM1809 217h2v2h-2zM1808 218h2v2h-2zM1815 215h2v2h-2zM1812 220h2v2h-2zM1804 221h2v2h-2zM1801 222h2v2h-2zM1801 213h2v2h-2zM1808 221h2v2h-2z" fill="#000" fill-opacity="0.8"/>
<path d="M1846 220h2v2h-2zM1839 211h2v2h-2zM1844 218h2v2h-2zM1834 220h2v2h-2zM1841 211h2v2h-2zM1843 210h2v2h-2zM1834 218h2v2h-2zM1831 216h2v2h-2zM1832 219h2v2h-2zM1835 217h2v2h-2zM1831 215h2v2h-2zM1846 218h2v2h-2zM1831 219h2v2h-2zM1846 214h2v2h-2zM1848 212h2v2h-2zM1839 221h2v2h-2zM1847 221h2v2h-2zM1835 210h2v2h-2zM1842 210h2v2h-2zM1839 210h2v2h-2zM1847 220h2v2h-2zM1844 216h2v2h-2zM1840 214h2v2h-2zM1843 217h2v2h-2zM1843 214h2v2h-2zM1850 217h2v2h-2zM1847 221h2v2h-2zM1835 210h2v2h-2zM1848 214h2v2h-2zM1841 215h2v2h-2zM1841 210h2v2h-2zM1839 213h2v2h-2zM1840 208h2v2h-2zM1846 218h2v2h-2zM1831 213h2v2h-2zM1840 219h2v2h-2zM1840 222h2v2h-2zM1840 211h2v2h-2zM1835 220h2v2h-2zM1836 220h2v2h-2zM1847 219h2v2h-2zM1847 215h2v2h-2zM1840 213h2v2h-2zM1837 210h2v2h-2zM1836 211h2v2h-2zM1831 217h2v2h-2zM1843 214h2v2h-2zM1848 220h2v2h-2zM1847 213h2v2h-2zM1831 218h2v2h-2zM1842 220h2v2h-2zM1843 222h2v2h-2zM1838 220h2v2h-2zM1836 209h2v2h-2zM1837 222h2v2h-2zM1831 220h2v2h-2zM1835 214h2v2h-2zM1840 217h2v2h-2zM1833 217h2v2h-2zM1843 220h2v2h-2zM1836 222h2v2h-2zM1847 222h2v2h-2zM1832 217h2v2h-2zM1830 217h2v2h-2zM1844 211h2v2h-2zM1831 217h2v2h-2zM1844 212h2v2h-2zM1839 208h2v2h-2zM1835 217h2v2h-2zM1841 223h2v2h-2zM1835 209h2v2h-2zM1843 213h2v2h-2zM1842 220h2v2h-2zM1844 222h2v2h-2zM1847 210h2v2h-2zM1840 223h2v2h-2zM1837 221h2v2h-2zM1840 214h2v2h-2zM1848 220h2v2h-2zM1838 221h2v2h-2z" fill="#000" fill-opacity="0.8"/>
<path d="M1868 211h1v1h-1zM1879 216h1v1h-1zM1869 219h1v1h-1zM1876 225h1v1h-1zM1879 214h1v1h-1zM1871 215h1v1h-1zM1873 226h1v1h-1zM1880 223h1v1h-1zM1876 214h1v1h-1zM1879 213h1v1h-1zM1875 206h1v1h-1zM1872 225h1v1h-1zM1870 207h1v1h-1zM1873 226h1v1h-1zM1880 214h1v1h-1zM1871 215h1v1h-1zM1869 216h1v1h-1zM1873 206h1v1h-1zM1871 214h1v1h-1zM1870 208h1v1h-1zM1877 226h1v1h-1zM1872 213h1v1h-1zM1877 214h1v1h-1zM1871 225h1v1h-1zM1869 211h1v1h-1zM1871 210h1v1h-1zM1873 221h1v1h-1zM1880 220h1v1h-1zM1874 207h1v1h-1zM1874 209h1v1h-1zM1874 223h1v1h-1zM1875 214h1v1h-1zM1870 216h1v1h-1zM1875 209h1v1h-1zM1871 223h1v1h-1zM1867 213h1v1h-1zM1870 225h1v1h-1zM1877 220h1v1h-1zM1876 218h1v1h-1zM1875 206h1v1h-1zM1875 221h1v1h-1zM1868 221h1v1h-1zM1877 206h1v1h-1zM1871 213h1v1h-1zM1871 219h1v1h-1zM1868 214h1v1h-1zM1875 222h1v1h-1zM1874 214h1v1h-1zM1876 205h1v1h-1zM1879 214h1v1h-1zM1868 213h1v1h-1zM1869 207h1v1h-1zM1872 210h1v1h-1zM1878 210h1v1h-1zM1869 210h1v1h-1zM1881 216h1v1h-1zM1871 209h1v1h-1zM1869 215h1v1h-1zM1876 224h1v1h-1zM1880 218h1v1h-1zM1871 210h1v1h-1zM1867 211h1v1h-1zM1876 213h1v1h-1zM1876 207h1v1h-1zM1879 218h1v1h-1zM1874 219h1v1h-1zM1867 213h1v1h-1zM1871 226h1v1h-1zM1873 212h1v1h-1zM1878 209h1v1h-1zM1880 212h1v1h-1zM1874 209h1v1h-1zM1877 205h1v1h-1zM1877 210h1v1h-1zM1874 208h1v1h-1zM1875 218h1v1h-1zM1877 219h1v1h-1zM1877 223h1v1h-1zM1872 208h1v1h-1zM1868 221h1v1h-1zM1872 224h1v1h-1zM1874 208h1v1h-1zM1877 226h1v1h-1zM1873 209h1v1h-1zM1870 222h1v1h-1z" fill="#000" fill-opacity="0.75"/>
<circle cx="1737" cy="250" r="11" fill="url(#b1)" opacity="0.7"/><path d="M1733 247h1v1h-1zM1742 250h1v1h-1zM1738 246h1v1h-1zM1733 251h1v1h-1zM1738 254h1v1h-1zM1734 252h1v1h-1zM1740 251h1v1h-1zM1740 256h1v1h-1zM1738 251h1v1h-1zM1731 252h1v1h-1zM1736 248h1v1h-1zM1732 254h1v1h-1zM1747 252h1v1h-1zM1738 253h1v1h-1zM1733 251h1v1h-1zM1733 246h1v1h-1zM1739 252h1v1h-1zM1736 245h1v1h-1zM1739 243h1v1h-1zM1742 248h1v1h-1zM1737 255h1v1h-1zM1740 243h1v1h-1zM1735 253h1v1h-1zM1733 241h1v1h-1zM1736 250h1v1h-1zM1740 251h1v1h-1zM1738 252h1v1h-1zM1745 253h1v1h-1zM1741 247h1v1h-1zM1744 249h1v1h-1zM1740 241h1v1h-1zM1739 249h1v1h-1zM1734 257h1v1h-1zM1740 249h1v1h-1zM1735 259h1v1h-1zM1742 254h1v1h-1zM1733 257h1v1h-1zM1741 248h1v1h-1zM1736 241h1v1h-1zM1741 244h1v1h-1zM1742 247h1v1h-1zM1733 252h1v1h-1zM1738 243h1v1h-1zM1736 254h1v1h-1zM1736 242h1v1h-1z" fill="#000" fill-opacity="0.4"/>
<path d="M1770 242h2v2h-2zM1767 250h2v2h-2zM1772 248h2v2h-2zM1762 252h2v2h-2zM1770 246h2v2h-2zM1773 262h2v2h-2zM1765 240h2v2h-2zM1778 244h2v2h-2zM1780 243h2v2h-2zM1768 257h2v2h-2zM1779 254h2v2h-2zM1776 249h2v2h-2zM1768 248h2v2h-2zM1780 255h2v2h-2zM1772 253h2v2h-2zM1778 259h2v2h-2zM1771 249h2v2h-2zM1773 263h2v2h-2zM1774 260h2v2h-2zM1763 256h2v2h-2zM1764 243h2v2h-2zM1767 249h2v2h-2zM1773 253h2v2h-2zM1774 246h2v2h-2zM1784 252h2v2h-2zM1776 262h2v2h-2zM1779 255h2v2h-2zM1774 262h2v2h-2zM1765 243h2v2h-2zM1773 238h2v2h-2zM1767 258h2v2h-2zM1768 251h2v2h-2zM1777 241h2v2h-2zM1774 245h2v2h-2zM1764 248h2v2h-2zM1772 246h2v2h-2zM1767 257h2v2h-2zM1780 254h2v2h-2zM1771 242h2v2h-2zM1766 242h2v2h-2zM1774 258h2v2h-2zM1779 250h2v2h-2zM1769 252h2v2h-2zM1773 255h2v2h-2zM1781 245h2v2h-2zM1780 241h2v2h-2zM1763 242h2v2h-2zM1764 248h2v2h-2zM1783 246h2v2h-2zM1780 247h2v2h-2zM1773 242h2v2h-2zM1784 250h2v2h-2zM1769 262h2v2h-2zM1773 254h2v2h-2zM1771 243h2v2h-2zM1762 249h2v2h-2zM1782 253h2v2h-2zM1771 258h2v2h-2zM1766 259h2v2h-2zM1772 243h2v2h-2zM1777 254h2v2h-2zM1769 252h2v2h-2zM1778 259h2v2h-2zM1768 238h2v2h-2zM1783 248h2v2h-2zM1769 254h2v2h-2zM1769 258h2v2h-2zM1763 248h2v2h-2zM1765 259h2v2h-2zM1770 259h2v2h-2zM1780 242h2v2h-2zM1770 256h2v2h-2zM1772 249h2v2h-2zM1778 257h2v2h-2zM1767 249h2v2h-2zM1777 252h2v2h-2zM1773 241h2v2h-2zM1783 249h2v2h-2zM1774 250h2v2h-2zM1773 251h2v2h-2zM1766 253h2v2h-2zM1780 253h2v2h-2zM1778 254h2v2h-2zM1772 262h2v2h-2zM1767 253h2v2h-2zM1780 252h2v2h-2zM1765 242h2v2h-2zM1781 244h2v2h-2zM1772 255h2v2h-2zM1773 238h2v2h-2zM1761 249h2v2h-2zM1766 248h2v2h-2zM1773 251h2v2h-2zM1765 240h2v2h-2zM1779 245h2v2h-2zM1766 239h2v2h-2zM1776 241h2v2h-2zM1765 255h2v2h-2zM1774 255h2v2h-2zM1767 238h2v2h-2zM1765 248h2v2h-2zM1767 257h2v2h-2zM1775 242h2v2h-2zM1777 249h2v2h-2zM1769 259h2v2h-2zM1763 256h2v2h-2zM1777 239h2v2h-2zM1770 249h2v2h-2zM1764 246h2v2h-2zM1766 251h2v2h-2zM1769 238h2v2h-2zM1780 256h2v2h-2zM1766 257h2v2h-2zM1781 242h2v2h-2zM1769 245h2v2h-2zM1776 247h2v2h-2zM1764 258h2v2h-2zM1769 256h2v2h-2zM1783 246h2v2h-2zM1769 257h2v2h-2zM1771 255h2v2h-2zM1772 263h2v2h-2zM1777 253h2v2h-2zM1773 253h2v2h-2zM1762 248h2v2h-2zM1777 241h2v2h-2zM1772 249h2v2h-2zM1770 262h2v2h-2zM1778 253h2v2h-2zM1766 251h2v2h-2zM1770 249h2v2h-2zM1773 263h2v2h-2zM1779 260h2v2h-2zM1777 262h2v2h-2zM1768 241h2v2h-2zM1774 252h2v2h-2zM1772 245h2v2h-2zM1776 261h2v2h-2zM1774 248h2v2h-2zM1781 248h2v2h-2zM1769 253h2v2h-2zM1763 258h2v2h-2zM1771 255h2v2h-2zM1775 254h2v2h-2zM1765 260h2v2h-2zM1777 253h2v2h-2zM1783 245h2v2h-2zM1778 249h2v2h-2zM1765 260h2v2h-2zM1762 251h2v2h-2zM1771 252h2v2h-2zM1766 259h2v2h-2zM1774 240h2v2h-2zM1763 252h2v2h-2zM1764 253h2v2h-2zM1775 245h2v2h-2zM1762 243h2v2h-2zM1775 246h2v2h-2zM1783 247h2v2h-2zM1775 256h2v2h-2zM1773 253h2v2h-2zM1780 249h2v2h-2zM1775 247h2v2h-2zM1783 251h2v2h-2zM1775 238h2v2h-2zM1769 241h2v2h-2zM1772 246h2v2h-2zM1764 248h2v2h-2zM1778 258h2v2h-2zM1768 258h2v2h-2zM1767 255h2v2h-2zM1766 258h2v2h-2zM1784 248h2v2h-2zM1779 241h2v2h-2zM1769 263h2v2h-2zM1771 255h2v2h-2zM1762 250h2v2h-2zM1767 259h2v2h-2zM1770 263h2v2h-2zM1764 253h2v2h-2zM1761 248h2v2h-2zM1781 249h2v2h-2zM1763 254h2v2h-2zM1779 254h2v2h-2zM1778 241h2v2h-2zM1782 254h2v2h-2zM1763 259h2v2h-2zM1768 254h2v2h-2zM1761 246h2v2h-2zM1762 255h2v2h-2z" fill="#000" fill-opacity="0.75"/>
<path d="M1795 236 L1798 243" stroke="#777" stroke-width="1.5"/>
<path d="M1838 242h3v3h-3zM1837 259h3v3h-3zM1834 255h3v3h-3zM1833 240h3v3h-3zM1836 247h3v3h-3zM1841 258h3v3h-3zM1836 247h3v3h-3zM1846 254h3v3h-3zM1840 252h3v3h-3zM1828 247h3v3h-3zM1829 248h3v3h-3z" fill="#000" fill-opacity="0.8"/>
<path d="M1880 239h3v3h-3zM1881 245h3v3h-3zM1872 245h3v3h-3zM1880 244h3v3h-3zM1862 251h3v3h-3zM1873 255h3v3h-3zM1878 240h3v3h-3zM1876 250h3v3h-3zM1873 250h3v3h-3zM1877 244h3v3h-3zM1873 257h3v3h-3zM1865 248h3v3h-3zM1867 241h3v3h-3zM1870 251h3v3h-3zM1885 248h3v3h-3zM1881 253h3v3h-3zM1874 236h3v3h-3zM1875 250h3v3h-3zM1866 250h3v3h-3zM1883 242h3v3h-3z" fill="#000" fill-opacity="0.85"/>
<path d="M1724 271h1v1h-1zM1731 282h1v1h-1zM1738 293h1v1h-1zM1745 278h1v1h-1zM1724 289h1v1h-1zM1731 274h1v1h-1zM1738 285h1v1h-1zM1745 296h1v1h-1zM1724 281h1v1h-1zM1731 292h1v1h-1zM1738 277h1v1h-1zM1745 288h1v1h-1zM1724 273h1v1h-1zM1731 284h1v1h-1zM1738 295h1v1h-1zM1745 280h1v1h-1zM1724 291h1v1h-1zM1731 276h1v1h-1zM1738 287h1v1h-1zM1745 272h1v1h-1zM1724 283h1v1h-1zM1731 294h1v1h-1z" fill="#000"/>
<circle cx="1806" cy="284" r="3" fill="none" stroke="#000" stroke-width="1.3"/><circle cx="1800" cy="279" r="3" fill="none" stroke="#000" stroke-width="1.3"/><circle cx="1812" cy="279" r="3" fill="none" stroke="#000" stroke-width="1.3"/><circle cx="1799" cy="287" r="3" fill="none" stroke="#000" stroke-width="1.3"/><circle cx="1813" cy="288" r="3" fill="none" stroke="#000" stroke-width="1.3"/><circle cx="1806" cy="276" r="2.5" fill="none" stroke="#000" stroke-width="1.3"/><circle cx="1806" cy="292" r="2.5" fill="none" stroke="#000" stroke-width="1.3"/><circle cx="1795" cy="283" r="2.2" fill="none" stroke="#000" stroke-width="1.3"/><circle cx="1817" cy="283" r="2.2" fill="none" stroke="#000" stroke-width="1.3"/><circle cx="1801" cy="294" r="2.2" fill="none" stroke="#000" stroke-width="1.3"/><circle cx="1811" cy="294" r="2.2" fill="none" stroke="#000" stroke-width="1.3"/><circle cx="1801" cy="273" r="2" fill="none" stroke="#000" stroke-width="1.3"/><circle cx="1811" cy="273" r="2" fill="none" stroke="#000" stroke-width="1.3"/>
<path d="M1768 292h2v2h-2zM1761 277h2v2h-2zM1775 292h2v2h-2zM1782 290h2v2h-2zM1785 286h2v2h-2zM1762 282h2v2h-2zM1778 287h2v2h-2zM1759 287h2v2h-2zM1765 282h2v2h-2zM1783 283h2v2h-2zM1766 283h2v2h-2zM1768 297h2v2h-2zM1779 292h2v2h-2zM1766 278h2v2h-2zM1774 271h2v2h-2zM1780 275h2v2h-2zM1773 287h2v2h-2zM1765 287h2v2h-2zM1777 296h2v2h-2zM1775 296h2v2h-2zM1776 282h2v2h-2zM1780 279h2v2h-2zM1773 290h2v2h-2zM1782 286h2v2h-2zM1762 293h2v2h-2zM1774 281h2v2h-2zM1765 289h2v2h-2zM1775 290h2v2h-2zM1771 296h2v2h-2zM1769 288h2v2h-2zM1774 293h2v2h-2zM1766 281h2v2h-2zM1770 278h2v2h-2zM1767 274h2v2h-2zM1777 295h2v2h-2zM1764 290h2v2h-2zM1763 278h2v2h-2zM1769 285h2v2h-2zM1775 271h2v2h-2zM1761 285h2v2h-2zM1770 297h2v2h-2zM1769 278h2v2h-2zM1778 271h2v2h-2zM1764 296h2v2h-2zM1766 285h2v2h-2zM1770 276h2v2h-2zM1771 273h2v2h-2zM1780 290h2v2h-2zM1778 276h2v2h-2zM1759 281h2v2h-2zM1763 287h2v2h-2zM1761 278h2v2h-2zM1773 288h2v2h-2zM1773 274h2v2h-2zM1768 297h2v2h-2zM1780 277h2v2h-2zM1785 283h2v2h-2zM1772 276h2v2h-2zM1784 285h2v2h-2zM1771 276h2v2h-2zM1762 285h2v2h-2zM1772 296h2v2h-2zM1764 281h2v2h-2zM1780 291h2v2h-2zM1767 295h2v2h-2zM1776 292h2v2h-2zM1775 292h2v2h-2zM1768 282h2v2h-2zM1781 287h2v2h-2zM1775 293h2v2h-2zM1774 288h2v2h-2zM1759 281h2v2h-2zM1779 277h2v2h-2zM1769 286h2v2h-2zM1771 292h2v2h-2zM1776 282h2v2h-2zM1781 281h2v2h-2zM1765 287h2v2h-2zM1778 283h2v2h-2zM1763 280h2v2h-2zM1774 290h2v2h-2zM1784 283h2v2h-2zM1771 271h2v2h-2zM1782 291h2v2h-2zM1772 277h2v2h-2zM1759 288h2v2h-2zM1766 295h2v2h-2zM1778 294h2v2h-2zM1771 294h2v2h-2zM1763 293h2v2h-2zM1772 274h2v2h-2zM1768 276h2v2h-2zM1774 277h2v2h-2zM1762 281h2v2h-2zM1770 286h2v2h-2zM1777 294h2v2h-2zM1775 296h2v2h-2zM1758 284h2v2h-2zM1779 274h2v2h-2zM1770 286h2v2h-2zM1761 280h2v2h-2zM1778 281h2v2h-2zM1780 296h2v2h-2zM1771 274h2v2h-2zM1772 279h2v2h-2zM1761 281h2v2h-2zM1768 281h2v2h-2zM1779 292h2v2h-2zM1776 281h2v2h-2zM1776 284h2v2h-2zM1774 275h2v2h-2zM1759 288h2v2h-2zM1766 279h2v2h-2zM1772 283h2v2h-2zM1770 295h2v2h-2zM1773 286h2v2h-2zM1764 283h2v2h-2zM1776 283h2v2h-2zM1775 276h2v2h-2zM1775 275h2v2h-2zM1768 277h2v2h-2zM1773 293h2v2h-2zM1775 276h2v2h-2zM1773 293h2v2h-2zM1778 288h2v2h-2zM1763 279h2v2h-2zM1766 280h2v2h-2zM1774 284h2v2h-2zM1769 289h2v2h-2zM1765 281h2v2h-2z" fill="#000" fill-opacity="0.75"/>
<path d="M1841 273h2v2h-2zM1834 274h2v2h-2zM1831 283h2v2h-2zM1839 287h2v2h-2zM1843 274h2v2h-2zM1851 292h2v2h-2zM1830 279h2v2h-2zM1835 286h2v2h-2zM1846 284h2v2h-2zM1831 294h2v2h-2zM1847 291h2v2h-2zM1833 285h2v2h-2zM1848 280h2v2h-2zM1850 285h2v2h-2zM1852 284h2v2h-2zM1849 274h2v2h-2zM1851 287h2v2h-2zM1837 293h2v2h-2zM1838 291h2v2h-2zM1847 292h2v2h-2zM1852 291h2v2h-2zM1853 288h2v2h-2zM1841 288h2v2h-2zM1840 274h2v2h-2zM1841 274h2v2h-2zM1837 281h2v2h-2zM1835 275h2v2h-2zM1841 284h2v2h-2zM1850 289h2v2h-2zM1848 280h2v2h-2zM1837 274h2v2h-2zM1833 290h2v2h-2zM1838 283h2v2h-2zM1836 295h2v2h-2zM1840 294h2v2h-2zM1840 292h2v2h-2zM1833 274h2v2h-2zM1849 281h2v2h-2zM1842 292h2v2h-2zM1846 286h2v2h-2zM1831 278h2v2h-2zM1840 290h2v2h-2zM1845 287h2v2h-2zM1833 284h2v2h-2zM1848 277h2v2h-2zM1835 292h2v2h-2zM1852 287h2v2h-2zM1840 276h2v2h-2zM1839 277h2v2h-2zM1841 291h2v2h-2zM1844 294h2v2h-2zM1833 275h2v2h-2zM1850 291h2v2h-2zM1831 285h2v2h-2zM1831 284h2v2h-2zM1843 292h2v2h-2zM1833 275h2v2h-2zM1845 281h2v2h-2zM1850 276h2v2h-2zM1837 271h2v2h-2zM1848 293h2v2h-2zM1844 281h2v2h-2zM1829 276h2v2h-2zM1837 296h2v2h-2zM1848 279h2v2h-2zM1844 289h2v2h-2zM1844 276h2v2h-2zM1836 293h2v2h-2zM1846 281h2v2h-2zM1854 286h2v2h-2zM1836 292h2v2h-2zM1847 283h2v2h-2zM1851 291h2v2h-2zM1840 291h2v2h-2zM1846 281h2v2h-2zM1847 279h2v2h-2zM1838 290h2v2h-2zM1830 281h2v2h-2zM1832 290h2v2h-2zM1836 296h2v2h-2zM1851 279h2v2h-2zM1842 281h2v2h-2zM1840 290h2v2h-2zM1848 295h2v2h-2zM1851 276h2v2h-2zM1836 282h2v2h-2zM1837 285h2v2h-2zM1846 280h2v2h-2zM1837 297h2v2h-2zM1844 297h2v2h-2zM1836 295h2v2h-2zM1850 292h2v2h-2zM1833 289h2v2h-2zM1834 275h2v2h-2zM1840 289h2v2h-2zM1838 283h2v2h-2zM1846 278h2v2h-2zM1844 291h2v2h-2zM1846 289h2v2h-2zM1831 282h2v2h-2zM1836 291h2v2h-2zM1828 285h2v2h-2zM1829 289h2v2h-2zM1835 285h2v2h-2zM1846 295h2v2h-2zM1831 285h2v2h-2zM1827 283h2v2h-2zM1834 290h2v2h-2zM1839 285h2v2h-2zM1831 281h2v2h-2zM1831 284h2v2h-2zM1828 286h2v2h-2zM1845 297h2v2h-2zM1850 293h2v2h-2zM1846 295h2v2h-2zM1840 288h2v2h-2zM1828 281h2v2h-2zM1847 273h2v2h-2zM1843 284h2v2h-2zM1837 287h2v2h-2zM1840 275h2v2h-2zM1840 272h2v2h-2zM1852 284h2v2h-2zM1847 277h2v2h-2zM1852 290h2v2h-2zM1843 286h2v2h-2zM1844 278h2v2h-2zM1839 282h2v2h-2zM1843 295h2v2h-2zM1850 286h2v2h-2z" fill="#000" fill-opacity="0.75"/>
<path d="M1880 282h2v2h-2zM1871 272h2v2h-2zM1865 276h2v2h-2zM1873 282h2v2h-2zM1878 294h2v2h-2zM1880 283h2v2h-2zM1870 281h2v2h-2zM1879 276h2v2h-2zM1863 282h2v2h-2zM1882 293h2v2h-2zM1878 272h2v2h-2zM1873 291h2v2h-2zM1881 295h2v2h-2zM1866 287h2v2h-2zM1862 283h2v2h-2zM1871 291h2v2h-2zM1875 272h2v2h-2zM1873 288h2v2h-2zM1885 279h2v2h-2zM1867 279h2v2h-2zM1883 282h2v2h-2zM1875 288h2v2h-2zM1868 293h2v2h-2zM1865 294h2v2h-2zM1868 276h2v2h-2zM1868 275h2v2h-2zM1867 277h2v2h-2zM1864 283h2v2h-2zM1877 279h2v2h-2zM1876 277h2v2h-2zM1876 281h2v2h-2zM1865 285h2v2h-2zM1872 278h2v2h-2zM1874 289h2v2h-2zM1864 280h2v2h-2zM1880 284h2v2h-2zM1878 297h2v2h-2zM1864 287h2v2h-2zM1871 295h2v2h-2zM1878 273h2v2h-2zM1883 284h2v2h-2zM1871 284h2v2h-2zM1876 276h2v2h-2zM1871 295h2v2h-2zM1866 279h2v2h-2zM1880 276h2v2h-2zM1872 287h2v2h-2zM1866 281h2v2h-2zM1866 282h2v2h-2zM1877 284h2v2h-2zM1876 288h2v2h-2zM1880 275h2v2h-2zM1875 296h2v2h-2zM1872 281h2v2h-2zM1874 277h2v2h-2zM1879 284h2v2h-2zM1872 291h2v2h-2zM1882 274h2v2h-2zM1869 281h2v2h-2zM1863 289h2v2h-2zM1887 289h2v2h-2zM1881 273h2v2h-2zM1871 274h2v2h-2zM1881 283h2v2h-2zM1872 289h2v2h-2zM1879 295h2v2h-2zM1884 291h2v2h-2zM1864 292h2v2h-2zM1875 272h2v2h-2zM1876 282h2v2h-2zM1873 292h2v2h-2zM1864 289h2v2h-2zM1883 276h2v2h-2zM1885 279h2v2h-2zM1868 292h2v2h-2zM1874 271h2v2h-2zM1868 290h2v2h-2zM1869 280h2v2h-2zM1874 284h2v2h-2zM1868 276h2v2h-2zM1878 294h2v2h-2zM1860 286h2v2h-2zM1882 277h2v2h-2zM1883 274h2v2h-2zM1880 295h2v2h-2zM1881 272h2v2h-2zM1875 275h2v2h-2zM1877 295h2v2h-2zM1877 296h2v2h-2zM1863 278h2v2h-2zM1869 290h2v2h-2zM1883 278h2v2h-2zM1866 291h2v2h-2zM1864 288h2v2h-2zM1867 283h2v2h-2zM1887 282h2v2h-2zM1874 277h2v2h-2zM1878 295h2v2h-2zM1879 274h2v2h-2zM1877 296h2v2h-2zM1866 283h2v2h-2zM1866 279h2v2h-2zM1867 274h2v2h-2zM1879 283h2v2h-2zM1862 278h2v2h-2zM1868 275h2v2h-2zM1875 282h2v2h-2zM1877 273h2v2h-2zM1867 280h2v2h-2zM1870 281h2v2h-2zM1867 283h2v2h-2zM1885 279h2v2h-2zM1862 286h2v2h-2zM1866 291h2v2h-2zM1881 295h2v2h-2zM1875 272h2v2h-2zM1885 290h2v2h-2zM1884 285h2v2h-2zM1871 284h2v2h-2zM1862 290h2v2h-2zM1868 278h2v2h-2zM1877 276h2v2h-2zM1881 279h2v2h-2zM1886 290h2v2h-2zM1880 287h2v2h-2zM1875 279h2v2h-2zM1862 280h2v2h-2zM1867 280h2v2h-2zM1875 271h2v2h-2zM1864 279h2v2h-2z" fill="#000" fill-opacity="0.75"/>
<circle cx="1738" cy="318" r="13" fill="#111"/><circle cx="1743" cy="323" r="8" fill="#888" opacity="0.5"/><path d="M1737 324h2v2h-2zM1750 317h2v2h-2zM1744 318h2v2h-2zM1741 327h2v2h-2zM1741 322h2v2h-2zM1740 314h2v2h-2zM1747 317h2v2h-2zM1747 313h2v2h-2zM1742 327h2v2h-2zM1736 320h2v2h-2zM1748 320h2v2h-2zM1735 316h2v2h-2zM1742 314h2v2h-2zM1737 319h2v2h-2zM1734 326h2v2h-2zM1736 318h2v2h-2zM1741 326h2v2h-2zM1738 327h2v2h-2zM1749 321h2v2h-2zM1733 312h2v2h-2zM1738 320h2v2h-2zM1744 325h2v2h-2zM1743 319h2v2h-2zM1742 309h2v2h-2zM1746 311h2v2h-2zM1731 315h2v2h-2zM1738 311h2v2h-2zM1739 319h2v2h-2zM1744 321h2v2h-2zM1737 319h2v2h-2zM1747 317h2v2h-2zM1739 309h2v2h-2zM1741 327h2v2h-2zM1745 317h2v2h-2zM1746 324h2v2h-2zM1747 312h2v2h-2zM1733 322h2v2h-2zM1744 321h2v2h-2zM1732 322h2v2h-2zM1748 323h2v2h-2z" fill="#fff" fill-opacity="1"/>
<path d="M1786 319h2v2h-2zM1773 325h2v2h-2zM1778 311h2v2h-2zM1761 319h2v2h-2zM1769 325h2v2h-2zM1782 323h2v2h-2zM1769 317h2v2h-2zM1779 316h2v2h-2zM1778 320h2v2h-2zM1779 319h2v2h-2zM1769 310h2v2h-2zM1763 313h2v2h-2zM1777 312h2v2h-2zM1767 321h2v2h-2zM1778 323h2v2h-2zM1775 325h2v2h-2zM1767 324h2v2h-2zM1761 316h2v2h-2zM1776 321h2v2h-2zM1770 315h2v2h-2zM1765 311h2v2h-2zM1761 323h2v2h-2zM1762 313h2v2h-2zM1760 317h2v2h-2zM1769 315h2v2h-2zM1761 317h2v2h-2zM1761 319h2v2h-2zM1783 314h2v2h-2zM1774 315h2v2h-2zM1769 312h2v2h-2zM1773 318h2v2h-2zM1778 325h2v2h-2zM1764 323h2v2h-2zM1765 315h2v2h-2zM1762 320h2v2h-2zM1782 317h2v2h-2zM1774 314h2v2h-2zM1769 312h2v2h-2zM1771 311h2v2h-2zM1784 322h2v2h-2zM1767 315h2v2h-2zM1768 319h2v2h-2zM1774 325h2v2h-2zM1769 311h2v2h-2zM1774 320h2v2h-2zM1765 322h2v2h-2zM1770 314h2v2h-2zM1771 312h2v2h-2zM1769 325h2v2h-2zM1782 321h2v2h-2zM1773 320h2v2h-2zM1762 319h2v2h-2zM1765 315h2v2h-2zM1783 315h2v2h-2zM1773 318h2v2h-2zM1781 317h2v2h-2zM1777 320h2v2h-2zM1770 315h2v2h-2zM1764 323h2v2h-2zM1765 323h2v2h-2zM1784 316h2v2h-2zM1764 313h2v2h-2zM1768 324h2v2h-2zM1766 313h2v2h-2zM1760 318h2v2h-2zM1775 324h2v2h-2zM1775 318h2v2h-2zM1772 326h2v2h-2zM1783 322h2v2h-2zM1769 317h2v2h-2zM1771 317h2v2h-2zM1776 314h2v2h-2zM1784 315h2v2h-2zM1778 322h2v2h-2zM1779 324h2v2h-2zM1775 319h2v2h-2zM1782 323h2v2h-2zM1772 323h2v2h-2zM1762 320h2v2h-2zM1760 322h2v2h-2zM1767 323h2v2h-2zM1776 315h2v2h-2zM1778 324h2v2h-2zM1767 325h2v2h-2zM1776 314h2v2h-2zM1770 320h2v2h-2zM1779 314h2v2h-2zM1769 321h2v2h-2zM1774 325h2v2h-2zM1779 322h2v2h-2zM1765 314h2v2h-2zM1763 318h2v2h-2zM1777 325h2v2h-2zM1780 314h2v2h-2zM1772 326h2v2h-2zM1774 321h2v2h-2zM1763 313h2v2h-2zM1768 317h2v2h-2zM1777 318h2v2h-2zM1764 325h2v2h-2zM1775 311h2v2h-2zM1783 321h2v2h-2zM1771 318h2v2h-2zM1775 311h2v2h-2zM1781 320h2v2h-2zM1779 315h2v2h-2zM1768 325h2v2h-2zM1759 321h2v2h-2zM1780 312h2v2h-2zM1770 315h2v2h-2zM1768 312h2v2h-2zM1762 319h2v2h-2zM1770 321h2v2h-2zM1779 315h2v2h-2zM1783 323h2v2h-2zM1761 318h2v2h-2zM1769 321h2v2h-2zM1766 324h2v2h-2zM1770 326h2v2h-2zM1768 325h2v2h-2zM1776 323h2v2h-2zM1776 320h2v2h-2zM1764 317h2v2h-2zM1766 317h2v2h-2zM1769 322h2v2h-2zM1775 317h2v2h-2zM1761 322h2v2h-2zM1766 316h2v2h-2zM1777 318h2v2h-2zM1773 319h2v2h-2z" fill="#000" fill-opacity="0.8"/>
<path d="M1796 320h2v2h-2zM1805 322h2v2h-2zM1807 316h2v2h-2zM1816 319h2v2h-2zM1813 321h2v2h-2zM1812 322h2v2h-2zM1811 314h2v2h-2zM1805 323h2v2h-2zM1805 316h2v2h-2zM1806 322h2v2h-2zM1800 318h2v2h-2zM1803 315h2v2h-2zM1812 316h2v2h-2zM1807 320h2v2h-2zM1810 320h2v2h-2zM1812 315h2v2h-2zM1795 320h2v2h-2zM1816 317h2v2h-2zM1806 322h2v2h-2zM1800 318h2v2h-2zM1803 321h2v2h-2zM1807 324h2v2h-2zM1800 315h2v2h-2zM1797 319h2v2h-2zM1805 317h2v2h-2zM1811 314h2v2h-2zM1800 324h2v2h-2zM1806 314h2v2h-2zM1814 319h2v2h-2zM1799 320h2v2h-2zM1813 321h2v2h-2zM1806 324h2v2h-2zM1800 317h2v2h-2zM1810 314h2v2h-2zM1811 320h2v2h-2zM1813 319h2v2h-2zM1816 314h2v2h-2zM1803 316h2v2h-2zM1806 321h2v2h-2zM1799 322h2v2h-2zM1814 319h2v2h-2zM1797 321h2v2h-2zM1809 314h2v2h-2zM1801 316h2v2h-2zM1797 320h2v2h-2zM1814 320h2v2h-2zM1801 318h2v2h-2zM1806 324h2v2h-2zM1803 320h2v2h-2zM1804 323h2v2h-2zM1800 320h2v2h-2zM1804 321h2v2h-2zM1797 318h2v2h-2zM1814 321h2v2h-2zM1802 324h2v2h-2zM1810 317h2v2h-2zM1804 314h2v2h-2zM1815 322h2v2h-2zM1815 315h2v2h-2zM1798 313h2v2h-2zM1797 316h2v2h-2zM1800 313h2v2h-2zM1810 315h2v2h-2zM1808 323h2v2h-2zM1800 316h2v2h-2zM1813 313h2v2h-2zM1803 313h2v2h-2zM1804 315h2v2h-2zM1808 316h2v2h-2zM1814 315h2v2h-2zM1805 321h2v2h-2zM1799 315h2v2h-2zM1805 316h2v2h-2zM1812 315h2v2h-2zM1796 320h2v2h-2zM1800 315h2v2h-2zM1804 323h2v2h-2zM1812 319h2v2h-2zM1808 316h2v2h-2zM1815 321h2v2h-2zM1800 322h2v2h-2zM1797 315h2v2h-2zM1802 324h2v2h-2zM1817 318h2v2h-2zM1803 323h2v2h-2zM1803 324h2v2h-2zM1799 322h2v2h-2zM1801 324h2v2h-2zM1807 315h2v2h-2zM1806 311h2v2h-2zM1806 321h2v2h-2zM1817 315h2v2h-2zM1813 322h2v2h-2zM1812 316h2v2h-2zM1807 314h2v2h-2zM1808 313h2v2h-2zM1802 318h2v2h-2zM1800 313h2v2h-2zM1805 319h2v2h-2zM1811 320h2v2h-2zM1816 318h2v2h-2zM1814 314h2v2h-2zM1811 321h2v2h-2zM1817 316h2v2h-2zM1817 318h2v2h-2zM1803 312h2v2h-2zM1813 316h2v2h-2zM1813 319h2v2h-2zM1812 318h2v2h-2zM1801 316h2v2h-2z" fill="#000" fill-opacity="0.6"/>
<path d="M1840 322h1v1h-1zM1839 326h1v1h-1zM1838 311h1v1h-1zM1841 321h1v1h-1zM1843 324h1v1h-1zM1838 310h1v1h-1zM1840 317h1v1h-1zM1841 313h1v1h-1zM1839 312h1v1h-1zM1840 310h1v1h-1zM1840 325h1v1h-1zM1840 309h1v1h-1zM1841 325h1v1h-1zM1838 314h1v1h-1zM1838 311h1v1h-1zM1838 308h1v1h-1zM1839 330h1v1h-1zM1842 314h1v1h-1zM1841 319h1v1h-1zM1840 305h1v1h-1z" fill="#000" fill-opacity="0.6"/>
<path d="M1862 306 l3 8 M1869 305 l4 8 M1877 311 l6 2 M1863 319 l7 -3 M1871 321 l8 0 M1865 327 l6 -5 M1879 324 l3 6" stroke="#666" stroke-width="1.6"/>
<path d="M1724 349 Q1731 347 1741 351 L1752 348 M1726 358 l3 -8 M1733 361 l0 -10 M1743 361 l0 -9 M1750 361 l0 -11 M1725 343 l5 6" stroke="#888" stroke-width="1.2" fill="none"/>
<path d="M1770 342h1v1h-1zM1767 351h1v1h-1zM1761 344h1v1h-1zM1775 363h1v1h-1zM1779 343h1v1h-1zM1768 358h1v1h-1zM1771 339h1v1h-1zM1778 346h1v1h-1zM1772 339h1v1h-1zM1763 361h1v1h-1zM1767 356h1v1h-1zM1784 352h1v1h-1zM1772 349h1v1h-1zM1779 355h1v1h-1zM1775 364h1v1h-1zM1776 362h1v1h-1zM1764 349h1v1h-1zM1778 345h1v1h-1zM1761 351h1v1h-1zM1767 355h1v1h-1zM1784 348h1v1h-1zM1763 349h1v1h-1zM1766 347h1v1h-1zM1781 357h1v1h-1zM1776 349h1v1h-1zM1780 351h1v1h-1zM1784 352h1v1h-1zM1771 358h1v1h-1zM1783 343h1v1h-1zM1776 342h1v1h-1zM1760 349h1v1h-1zM1778 341h1v1h-1zM1769 364h1v1h-1zM1782 349h1v1h-1zM1778 352h1v1h-1zM1767 345h1v1h-1zM1782 346h1v1h-1zM1770 347h1v1h-1zM1760 350h1v1h-1zM1784 345h1v1h-1zM1771 362h1v1h-1zM1776 351h1v1h-1zM1777 355h1v1h-1zM1771 344h1v1h-1zM1769 340h1v1h-1zM1773 349h1v1h-1zM1767 340h1v1h-1zM1768 340h1v1h-1zM1777 342h1v1h-1zM1779 344h1v1h-1zM1778 357h1v1h-1zM1779 349h1v1h-1zM1759 354h1v1h-1zM1767 341h1v1h-1zM1762 354h1v1h-1zM1778 355h1v1h-1zM1778 361h1v1h-1zM1768 351h1v1h-1zM1769 349h1v1h-1zM1770 353h1v1h-1zM1767 353h1v1h-1zM1780 349h1v1h-1zM1776 344h1v1h-1zM1766 363h1v1h-1zM1770 362h1v1h-1zM1763 341h1v1h-1zM1771 349h1v1h-1zM1759 356h1v1h-1zM1777 345h1v1h-1zM1777 357h1v1h-1zM1772 346h1v1h-1zM1778 347h1v1h-1zM1768 341h1v1h-1zM1772 362h1v1h-1zM1767 347h1v1h-1zM1761 350h1v1h-1zM1779 350h1v1h-1zM1777 361h1v1h-1zM1764 346h1v1h-1zM1777 349h1v1h-1zM1762 351h1v1h-1zM1775 361h1v1h-1zM1764 355h1v1h-1zM1774 338h1v1h-1zM1778 351h1v1h-1zM1763 362h1v1h-1zM1776 354h1v1h-1zM1785 357h1v1h-1zM1763 352h1v1h-1zM1783 360h1v1h-1zM1784 351h1v1h-1zM1781 346h1v1h-1zM1770 357h1v1h-1zM1770 357h1v1h-1zM1770 354h1v1h-1zM1785 355h1v1h-1zM1779 342h1v1h-1zM1766 360h1v1h-1zM1760 349h1v1h-1zM1769 361h1v1h-1zM1760 348h1v1h-1zM1772 353h1v1h-1zM1761 359h1v1h-1zM1777 362h1v1h-1zM1777 357h1v1h-1zM1769 349h1v1h-1zM1762 355h1v1h-1zM1763 360h1v1h-1zM1776 346h1v1h-1zM1773 340h1v1h-1zM1763 346h1v1h-1zM1761 347h1v1h-1zM1769 345h1v1h-1zM1765 342h1v1h-1zM1759 355h1v1h-1zM1768 362h1v1h-1zM1762 347h1v1h-1zM1777 362h1v1h-1zM1780 359h1v1h-1zM1761 356h1v1h-1zM1781 341h1v1h-1zM1774 365h1v1h-1zM1762 354h1v1h-1zM1785 355h1v1h-1zM1773 359h1v1h-1zM1770 358h1v1h-1zM1770 359h1v1h-1zM1764 350h1v1h-1zM1773 338h1v1h-1zM1780 348h1v1h-1zM1767 341h1v1h-1zM1771 343h1v1h-1zM1776 363h1v1h-1zM1767 345h1v1h-1zM1770 349h1v1h-1zM1775 339h1v1h-1zM1777 351h1v1h-1zM1768 340h1v1h-1zM1779 360h1v1h-1zM1774 358h1v1h-1zM1779 353h1v1h-1zM1778 343h1v1h-1zM1776 339h1v1h-1zM1779 362h1v1h-1zM1781 345h1v1h-1zM1769 357h1v1h-1zM1764 355h1v1h-1zM1771 363h1v1h-1zM1767 347h1v1h-1zM1777 361h1v1h-1z" fill="#000" fill-opacity="0.6"/>
<path d="M1804 343h2v2h-2zM1799 343h2v2h-2zM1806 344h2v2h-2zM1806 342h2v2h-2zM1803 356h2v2h-2zM1799 359h2v2h-2zM1806 345h2v2h-2zM1803 351h2v2h-2zM1799 347h2v2h-2zM1807 341h2v2h-2zM1817 356h2v2h-2zM1812 362h2v2h-2zM1812 351h2v2h-2zM1805 356h2v2h-2zM1815 346h2v2h-2zM1817 350h2v2h-2zM1799 360h2v2h-2zM1802 357h2v2h-2zM1797 357h2v2h-2zM1802 360h2v2h-2zM1796 348h2v2h-2zM1798 353h2v2h-2zM1798 349h2v2h-2zM1806 348h2v2h-2zM1807 354h2v2h-2zM1797 358h2v2h-2zM1798 346h2v2h-2zM1816 348h2v2h-2zM1804 357h2v2h-2zM1800 351h2v2h-2zM1803 350h2v2h-2zM1798 358h2v2h-2zM1806 357h2v2h-2zM1806 347h2v2h-2zM1814 347h2v2h-2zM1813 346h2v2h-2zM1800 352h2v2h-2zM1817 356h2v2h-2zM1807 355h2v2h-2zM1814 348h2v2h-2zM1796 346h2v2h-2zM1805 346h2v2h-2zM1804 362h2v2h-2zM1804 347h2v2h-2zM1806 361h2v2h-2zM1816 356h2v2h-2zM1803 348h2v2h-2zM1798 348h2v2h-2zM1813 356h2v2h-2zM1808 344h2v2h-2zM1805 346h2v2h-2zM1816 352h2v2h-2zM1805 352h2v2h-2zM1806 352h2v2h-2zM1801 354h2v2h-2zM1806 359h2v2h-2zM1810 357h2v2h-2zM1802 352h2v2h-2zM1795 348h2v2h-2zM1804 340h2v2h-2zM1814 358h2v2h-2zM1807 364h2v2h-2zM1796 352h2v2h-2zM1807 348h2v2h-2zM1815 358h2v2h-2zM1809 345h2v2h-2zM1808 352h2v2h-2zM1809 343h2v2h-2zM1799 359h2v2h-2zM1806 351h2v2h-2zM1806 340h2v2h-2zM1814 344h2v2h-2zM1797 355h2v2h-2zM1814 359h2v2h-2zM1802 346h2v2h-2zM1811 354h2v2h-2zM1797 359h2v2h-2zM1795 354h2v2h-2zM1808 358h2v2h-2zM1807 358h2v2h-2zM1808 345h2v2h-2zM1802 361h2v2h-2zM1795 356h2v2h-2zM1802 342h2v2h-2zM1799 355h2v2h-2zM1795 356h2v2h-2zM1814 349h2v2h-2zM1803 352h2v2h-2zM1812 345h2v2h-2zM1802 355h2v2h-2zM1796 354h2v2h-2zM1805 358h2v2h-2zM1798 351h2v2h-2zM1809 352h2v2h-2zM1799 359h2v2h-2zM1805 353h2v2h-2zM1806 357h2v2h-2zM1807 346h2v2h-2zM1812 351h2v2h-2zM1807 353h2v2h-2zM1797 352h2v2h-2zM1808 342h2v2h-2zM1803 351h2v2h-2zM1811 349h2v2h-2zM1806 357h2v2h-2zM1798 347h2v2h-2zM1804 358h2v2h-2zM1815 353h2v2h-2zM1805 348h2v2h-2zM1807 362h2v2h-2zM1805 348h2v2h-2zM1816 351h2v2h-2zM1805 345h2v2h-2zM1814 350h2v2h-2zM1798 343h2v2h-2zM1809 348h2v2h-2zM1810 356h2v2h-2zM1814 360h2v2h-2zM1798 350h2v2h-2zM1800 358h2v2h-2zM1797 356h2v2h-2zM1796 358h2v2h-2zM1812 343h2v2h-2zM1806 347h2v2h-2zM1796 357h2v2h-2zM1800 359h2v2h-2zM1809 363h2v2h-2zM1802 358h2v2h-2zM1807 349h2v2h-2zM1814 352h2v2h-2z" fill="#000" fill-opacity="0.8"/>
<path d="M1825 341 L1853 340" stroke="#444" stroke-width="1"/><path d="M1825 345 L1853 344" stroke="#444" stroke-width="1"/><path d="M1825 349 L1853 348" stroke="#444" stroke-width="1"/><path d="M1825 353 L1853 352" stroke="#444" stroke-width="1"/><path d="M1825 357 L1853 356" stroke="#444" stroke-width="1"/><path d="M1825 361 L1853 360" stroke="#444" stroke-width="1"/><path d="M1825 365 L1853 364" stroke="#444" stroke-width="1"/>
<path d="M1870 353h2v2h-2zM1866 359h2v2h-2zM1883 344h2v2h-2zM1875 349h2v2h-2zM1869 358h2v2h-2zM1884 354h2v2h-2zM1872 362h2v2h-2zM1871 346h2v2h-2zM1870 359h2v2h-2zM1874 353h2v2h-2zM1869 355h2v2h-2zM1874 363h2v2h-2zM1874 344h2v2h-2zM1884 354h2v2h-2zM1874 356h2v2h-2zM1874 341h2v2h-2zM1874 361h2v2h-2zM1881 346h2v2h-2zM1871 356h2v2h-2zM1885 354h2v2h-2zM1876 347h2v2h-2zM1871 348h2v2h-2zM1874 345h2v2h-2zM1871 344h2v2h-2zM1882 356h2v2h-2zM1873 350h2v2h-2zM1880 353h2v2h-2zM1872 340h2v2h-2zM1863 356h2v2h-2zM1872 346h2v2h-2zM1864 356h2v2h-2zM1866 353h2v2h-2zM1873 347h2v2h-2zM1866 354h2v2h-2zM1865 348h2v2h-2zM1873 360h2v2h-2zM1870 353h2v2h-2zM1877 341h2v2h-2zM1867 349h2v2h-2zM1868 358h2v2h-2zM1870 357h2v2h-2zM1881 350h2v2h-2zM1876 361h2v2h-2zM1881 352h2v2h-2zM1864 348h2v2h-2zM1873 355h2v2h-2zM1875 352h2v2h-2zM1867 356h2v2h-2zM1881 351h2v2h-2zM1874 358h2v2h-2zM1871 355h2v2h-2zM1881 347h2v2h-2zM1873 346h2v2h-2zM1868 342h2v2h-2zM1875 364h2v2h-2zM1872 362h2v2h-2zM1882 349h2v2h-2zM1881 349h2v2h-2zM1863 356h2v2h-2zM1872 350h2v2h-2zM1879 359h2v2h-2zM1872 354h2v2h-2zM1877 346h2v2h-2zM1880 348h2v2h-2zM1877 359h2v2h-2zM1879 342h2v2h-2zM1868 350h2v2h-2zM1868 351h2v2h-2zM1873 353h2v2h-2zM1886 353h2v2h-2zM1875 346h2v2h-2zM1872 350h2v2h-2zM1878 344h2v2h-2zM1873 344h2v2h-2zM1864 356h2v2h-2zM1873 355h2v2h-2zM1883 360h2v2h-2zM1873 355h2v2h-2zM1870 350h2v2h-2zM1865 357h2v2h-2zM1875 360h2v2h-2zM1884 347h2v2h-2zM1876 350h2v2h-2zM1883 350h2v2h-2zM1881 362h2v2h-2zM1883 360h2v2h-2zM1877 353h2v2h-2zM1865 354h2v2h-2zM1865 346h2v2h-2zM1882 358h2v2h-2zM1869 363h2v2h-2zM1867 345h2v2h-2zM1882 360h2v2h-2zM1873 357h2v2h-2zM1865 357h2v2h-2zM1870 359h2v2h-2zM1869 348h2v2h-2zM1880 357h2v2h-2zM1872 342h2v2h-2zM1876 361h2v2h-2zM1879 343h2v2h-2zM1875 354h2v2h-2zM1884 351h2v2h-2zM1872 362h2v2h-2zM1866 347h2v2h-2zM1868 360h2v2h-2zM1869 357h2v2h-2zM1869 361h2v2h-2zM1878 347h2v2h-2zM1879 355h2v2h-2zM1874 345h2v2h-2zM1885 353h2v2h-2zM1871 353h2v2h-2zM1874 343h2v2h-2zM1880 343h2v2h-2zM1879 342h2v2h-2zM1866 359h2v2h-2zM1864 352h2v2h-2zM1876 361h2v2h-2zM1884 357h2v2h-2zM1878 360h2v2h-2zM1880 343h2v2h-2zM1879 346h2v2h-2zM1885 357h2v2h-2zM1870 362h2v2h-2zM1867 356h2v2h-2zM1865 350h2v2h-2zM1876 343h2v2h-2zM1878 360h2v2h-2zM1883 358h2v2h-2zM1877 358h2v2h-2zM1868 348h2v2h-2zM1882 345h2v2h-2zM1870 359h2v2h-2zM1873 343h2v2h-2zM1869 347h2v2h-2zM1866 348h2v2h-2zM1880 348h2v2h-2zM1876 347h2v2h-2zM1873 358h2v2h-2zM1877 350h2v2h-2zM1872 360h2v2h-2zM1872 343h2v2h-2zM1879 357h2v2h-2zM1873 348h2v2h-2zM1882 360h2v2h-2zM1877 352h2v2h-2zM1878 362h2v2h-2zM1869 358h2v2h-2zM1863 349h2v2h-2z" fill="#000" fill-opacity="0.8"/>
<path d="M1744 388h1v1h-1zM1729 392h1v1h-1zM1744 393h1v1h-1zM1735 385h1v1h-1zM1736 389h1v1h-1zM1739 385h1v1h-1zM1744 395h1v1h-1zM1739 397h1v1h-1zM1730 398h1v1h-1zM1730 383h1v1h-1zM1742 395h1v1h-1zM1740 374h1v1h-1zM1735 376h1v1h-1zM1746 382h1v1h-1zM1725 382h1v1h-1zM1740 377h1v1h-1zM1741 374h1v1h-1zM1736 395h1v1h-1zM1738 377h1v1h-1zM1732 394h1v1h-1zM1744 389h1v1h-1zM1745 385h1v1h-1zM1738 385h1v1h-1zM1734 395h1v1h-1zM1733 399h1v1h-1zM1745 384h1v1h-1zM1747 396h1v1h-1zM1741 376h1v1h-1zM1739 386h1v1h-1zM1734 375h1v1h-1zM1730 388h1v1h-1zM1737 394h1v1h-1zM1728 391h1v1h-1zM1731 390h1v1h-1zM1740 397h1v1h-1zM1744 384h1v1h-1zM1740 375h1v1h-1zM1739 391h1v1h-1zM1741 381h1v1h-1zM1741 389h1v1h-1zM1741 378h1v1h-1zM1745 386h1v1h-1zM1728 385h1v1h-1zM1746 396h1v1h-1zM1736 379h1v1h-1zM1735 392h1v1h-1zM1749 387h1v1h-1zM1736 397h1v1h-1zM1742 379h1v1h-1zM1736 394h1v1h-1zM1735 386h1v1h-1zM1732 391h1v1h-1zM1748 394h1v1h-1zM1735 377h1v1h-1zM1749 391h1v1h-1zM1728 395h1v1h-1zM1734 381h1v1h-1zM1738 375h1v1h-1zM1730 396h1v1h-1zM1735 391h1v1h-1zM1749 389h1v1h-1zM1737 392h1v1h-1zM1750 390h1v1h-1zM1736 399h1v1h-1zM1748 378h1v1h-1zM1740 399h1v1h-1zM1729 377h1v1h-1zM1745 382h1v1h-1zM1729 395h1v1h-1zM1737 390h1v1h-1zM1748 388h1v1h-1zM1733 399h1v1h-1zM1747 387h1v1h-1zM1735 375h1v1h-1zM1744 376h1v1h-1zM1748 376h1v1h-1zM1745 378h1v1h-1zM1730 392h1v1h-1zM1739 393h1v1h-1zM1729 385h1v1h-1z" fill="#000" fill-opacity="0.35"/><path d="M1731 377 Q1737 379 1739 385 Q1743 391 1747 393" stroke="#222" stroke-width="4" fill="none" opacity="0.8"/>
<path d="M1769 388h1v1h-1zM1779 385h1v1h-1zM1764 387h1v1h-1zM1761 382h1v1h-1zM1781 382h1v1h-1zM1779 383h1v1h-1zM1765 387h1v1h-1zM1777 385h1v1h-1zM1774 397h1v1h-1zM1772 389h1v1h-1zM1766 393h1v1h-1zM1766 388h1v1h-1zM1768 392h1v1h-1zM1776 394h1v1h-1zM1773 392h1v1h-1zM1783 381h1v1h-1zM1765 392h1v1h-1zM1773 387h1v1h-1zM1759 385h1v1h-1zM1780 390h1v1h-1zM1772 385h1v1h-1zM1766 383h1v1h-1zM1772 374h1v1h-1zM1781 378h1v1h-1zM1781 391h1v1h-1zM1765 383h1v1h-1zM1775 395h1v1h-1zM1765 390h1v1h-1zM1778 384h1v1h-1zM1775 382h1v1h-1zM1769 378h1v1h-1zM1765 392h1v1h-1zM1776 391h1v1h-1zM1767 389h1v1h-1zM1778 377h1v1h-1zM1765 378h1v1h-1zM1773 387h1v1h-1zM1783 392h1v1h-1zM1759 387h1v1h-1zM1768 393h1v1h-1zM1765 376h1v1h-1zM1764 390h1v1h-1zM1768 391h1v1h-1zM1782 379h1v1h-1zM1768 388h1v1h-1zM1778 380h1v1h-1zM1772 378h1v1h-1zM1782 391h1v1h-1zM1782 394h1v1h-1zM1776 393h1v1h-1zM1778 386h1v1h-1zM1770 383h1v1h-1zM1774 388h1v1h-1zM1781 387h1v1h-1zM1774 397h1v1h-1zM1768 378h1v1h-1zM1784 380h1v1h-1zM1768 397h1v1h-1zM1770 381h1v1h-1zM1773 384h1v1h-1z" fill="#000" fill-opacity="0.5"/>
<path d="M1805 378h1v1h-1zM1805 380h1v1h-1zM1805 381h1v1h-1zM1807 390h1v1h-1zM1805 394h1v1h-1zM1808 380h1v1h-1zM1805 393h1v1h-1zM1806 385h1v1h-1zM1805 385h1v1h-1zM1808 389h1v1h-1zM1806 382h1v1h-1zM1805 392h1v1h-1zM1805 385h1v1h-1zM1806 387h1v1h-1zM1805 394h1v1h-1zM1807 393h1v1h-1zM1804 379h1v1h-1zM1806 384h1v1h-1zM1805 393h1v1h-1zM1804 379h1v1h-1zM1809 388h1v1h-1zM1804 391h1v1h-1zM1804 383h1v1h-1zM1806 386h1v1h-1zM1809 383h1v1h-1zM1805 380h1v1h-1zM1806 380h1v1h-1zM1806 393h1v1h-1zM1809 385h1v1h-1zM1806 383h1v1h-1z" fill="#000" fill-opacity="0.6"/>
<path d="M1840 391h2v2h-2zM1838 382h2v2h-2zM1839 381h2v2h-2zM1839 388h2v2h-2zM1840 396h2v2h-2zM1841 382h2v2h-2zM1840 382h2v2h-2zM1840 386h2v2h-2zM1841 387h2v2h-2zM1842 385h2v2h-2zM1840 389h2v2h-2zM1840 386h2v2h-2z" fill="#000" fill-opacity="0.9"/>
<ellipse cx="1874" cy="386" rx="4" ry="13" fill="url(#b3)"/>
<path d="M1724 407 L1741 425" stroke="#000" stroke-width="1"/><path d="M1729 407 L1746 425" stroke="#000" stroke-width="1"/><path d="M1734 407 L1751 425" stroke="#000" stroke-width="1"/><path d="M1739 407 L1756 425" stroke="#000" stroke-width="1"/>
<circle cx="1772" cy="420" r="0.8" fill="#000"/>
<ellipse cx="1806" cy="420" rx="13" ry="11" fill="url(#b1)" opacity="0.45"/>
<circle cx="1840" cy="420" r="13" fill="#f2d9a8"/><circle cx="1840" cy="420" r="6" fill="#ffc020" opacity="0.8"/><circle cx="1840" cy="420" r="3" fill="#fff3d0"/>
<path d="M1878 423h2v2h-2zM1877 423h2v2h-2zM1871 418h2v2h-2zM1880 425h2v2h-2zM1872 426h2v2h-2zM1872 427h2v2h-2zM1880 420h2v2h-2zM1878 417h2v2h-2zM1871 417h2v2h-2zM1880 423h2v2h-2zM1872 420h2v2h-2zM1867 419h2v2h-2zM1868 425h2v2h-2zM1879 417h2v2h-2zM1871 427h2v2h-2z" fill="#000" fill-opacity="0.7"/>
<path d="M1885.5 161.5h5M1888 159v5M1749.5 195.5h5M1752 193v5M1783.5 195.5h5M1786 193v5M1817.5 195.5h5M1820 193v5M1851.5 195.5h5M1854 193v5M1885.5 195.5h5M1888 193v5M1749.5 229.5h5M1752 227v5M1783.5 229.5h5M1786 227v5M1817.5 229.5h5M1820 227v5M1851.5 229.5h5M1854 227v5M1885.5 229.5h5M1888 227v5M1749.5 263.5h5M1752 261v5M1783.5 263.5h5M1786 261v5M1851.5 263.5h5M1854 261v5M1885.5 263.5h5M1888 261v5M1783.5 297.5h5M1786 295v5M1817.5 297.5h5M1820 295v5M1851.5 297.5h5M1854 295v5M1885.5 297.5h5M1888 295v5M1749.5 331.5h5M1752 329v5M1783.5 331.5h5M1786 329v5M1817.5 331.5h5M1820 329v5M1851.5 331.5h5M1854 329v5M1783.5 365.5h5M1786 363v5M1817.5 365.5h5M1820 363v5M1851.5 365.5h5M1854 363v5M1885.5 365.5h5M1888 363v5M1749.5 399.5h5M1752 397v5M1783.5 399.5h5M1786 397v5M1817.5 399.5h5M1820 397v5M1851.5 399.5h5M1854 397v5" stroke="#000" stroke-width="1"/>
<path d="M1818 164 L1822 164 L1822 160Z" fill="#5ab0e0"/>
<path d="M1852 164 L1856 164 L1856 160Z" fill="#5ab0e0"/>
<path d="M1818 266 L1822 266 L1822 262Z" fill="#d8a070"/>
<path d="M1886 402 L1890 402 L1890 398Z" fill="#d8a070"/>
</svg><div class="a" style="left:1901px;top:131px;width:15px;height:292px;background:#1f1f1f"></div>
<div class="a" style="left:1903px;top:131px;width:12px;height:208px;background:#5e5e5e;border-radius:2px"></div>
<div class="a" style="left:1722px;top:427px;width:193px;height:20px;background:#1f1f1f"></div>
<div class="t" style="left:1724px;top:430px;font-size:14px;letter-spacing:0.5px;color:#dcdcdc">Basic,</div>
<svg style="left:1902px;top:433px" width="9" height="6" viewBox="0 0 9 6"><path d="M0.5 0.5 L4.5 4.5 L8.5 0.5" fill="none" stroke="#e0e0e0" stroke-width="1.3"/></svg>
<div class="a" style="left:1720px;top:450px;width:197px;height:20px;background:#303030;border:1px solid #6a6a6a"></div>
<div class="a" style="left:1721px;top:451px;width:3px;height:18px;background:#555"></div>
<div class="a" style="left:1723px;top:451px;width:1px;height:18px;background:#000"></div>
<div class="t" style="left:1722px;top:452px;font-size:14px;letter-spacing:0.8px;color:#dcdcdc">Spacing</div>
<div class="t" style="left:1873px;top:452px;font-size:14px;letter-spacing:0.5px;color:#dcdcdc">10.0</div>
<div class="a" style="left:1905px;top:452px;width:11px;height:16px;background:#3a3a3a"></div>
<svg style="left:1906px;top:453px" width="9" height="15" viewBox="0 0 9 15"><path d="M1 5 L4.5 1.5 L8 5 M1 10 L4.5 13.5 L8 10" fill="none" stroke="#ccc" stroke-width="1.3"/></svg>
<svg style="left:1720px;top:473px" width="200" height="20" viewBox="1720 473 200 20">
 <defs><pattern id="ck2" width="2" height="2" patternUnits="userSpaceOnUse"><rect width="2" height="2" fill="#777"/><rect width="1" height="1" fill="#c8c8c8"/><rect x="1" y="1" width="1" height="1" fill="#c8c8c8"/></pattern></defs>
 <g fill="#bebebe">
  <rect x="1729" y="478" width="5" height="1.5"/><rect x="1729" y="481.5" width="3" height="1.5"/><rect x="1729" y="485" width="2" height="1.5"/><rect x="1729" y="488" width="10" height="1.5"/>
  <path d="M1740.5 477 L1742 478.5 L1735 485.5 L1732.5 486.5 L1733.5 484Z"/>
 </g>
 <path d="M1764.5 479.5 H1769.5 L1773 483 V489 H1764.5Z" fill="none" stroke="#bebebe" stroke-width="1.2"/>
 <path d="M1763.5 476 V481 M1761 478.5 H1766" stroke="#bebebe" stroke-width="1.4"/>
 <rect x="1796" y="478" width="8" height="6" fill="none" stroke="#bebebe" stroke-width="1.1"/>
 <path d="M1799.5 487.5 H1807 V481.5 H1804.5" fill="none" stroke="#999" stroke-width="1.1"/>
 <rect x="1828" y="476" width="13.5" height="13.5" fill="url(#ck2)"/>
 <path d="M1830.5 478.5 L1839 487 M1839 478.5 L1830.5 487" stroke="#333" stroke-width="2.2"/>
 <path d="M1871.5 485 A5.5 5.5 0 1 1 1871 478.5" fill="none" stroke="#bebebe" stroke-width="2"/>
 <path d="M1873.5 476 V482 H1867.5Z" fill="#bebebe"/>
 <path d="M1896 482 V477 H1902 L1905 480 V482" fill="none" stroke="#bebebe" stroke-width="1.1"/>
 <path d="M1893.5 489 V484 L1896 482 H1907 V489Z" fill="url(#ck2)"/>
</svg>
<div class="a" style="left:1809px;top:497px;width:4px;height:2px;background:#aaa"></div>
<div class="a" style="left:1816px;top:497px;width:4px;height:2px;background:#aaa"></div>
<div class="a" style="left:1823px;top:497px;width:4px;height:2px;background:#aaa"></div>

<!-- LAYERS -->
<div class="a" style="left:1717px;top:500px;width:21px;height:24px;background:#454545;border:1px solid #585858;border-bottom:none"></div>
<div class="a" style="left:1738px;top:503px;width:37px;height:20px;background:#2e2e2e"></div>
<div class="a" style="left:1756px;top:503px;width:1px;height:20px;background:#454545"></div>
<svg style="left:1717px;top:500px" width="60" height="24" viewBox="1717 500 60 24">
 <g fill="#bebebe">
  <path d="M1723 505 H1734 L1732 508 H1721Z M1723 509.5 H1734 L1732 512.5 H1721Z M1723 514 H1734 L1732 517 H1721Z"/>
 </g>
 <rect x="1741.5" y="506.5" width="12" height="12" fill="none" stroke="#bebebe"/>
 <path d="M1745 508 V517 M1747.5 508 V517 M1750 508 V517" stroke="#bebebe"/>
 <path d="M1759 510.5 H1773" stroke="#bebebe" stroke-width="1"/><rect x="1758.5" y="509" width="3" height="3" fill="#bebebe"/><rect x="1764.5" y="509" width="3" height="3" fill="#bebebe"/><rect x="1770.5" y="509" width="3" height="3" fill="#bebebe"/>
 <path d="M1760.5 518 Q1766 510 1771.5 518" fill="none" stroke="#bebebe" stroke-width="1.8"/>
</svg>
<svg style="left:1904px;top:507px" width="11" height="11" viewBox="0 0 11 11"><rect x="0.5" y="0.5" width="10" height="10" fill="none" stroke="#999"/><path d="M2.5 5.5 L8.5 2 V9 Z" fill="#999"/></svg>
<div class="a" style="left:1718px;top:523px;width:202px;height:496px;border:1px solid #585858;border-right:none"></div>
<div class="a" style="left:1720px;top:526px;width:152px;height:31px;background:#2b2b2b;border-radius:4px;border:1px solid #262626"></div>
<div class="t" style="left:1727px;top:534px;font-size:14px;letter-spacing:0.5px;color:#dcdcdc">Mode</div>
<div class="t" style="left:1795px;top:534px;font-size:14px;letter-spacing:0.6px;color:#dcdcdc">Normal</div>
<svg style="left:1853px;top:538px" width="13" height="8" viewBox="0 0 13 8"><path d="M1 1 L6.5 6.5 L12 1" fill="none" stroke="#e0e0e0" stroke-width="1.5"/></svg>
<div class="a" style="left:1873px;top:526px;width:44px;height:31px;background:#2b2b2b;border-radius:4px;border:1px solid #262626"></div>
<svg style="left:1878px;top:535px" width="40" height="13" viewBox="1878 535 40 13">
 <path d="M1882 542 A4.5 4.5 0 1 1 1886 546" fill="none" stroke="#bebebe" stroke-width="1.4"/>
 <path d="M1879 541 L1882 538 L1884 542Z" fill="#bebebe"/><circle cx="1882" cy="546" r="1.5" fill="#bebebe"/>
 <path d="M1898 538 L1904 544 L1910 538" fill="none" stroke="#e0e0e0" stroke-width="1.5"/>
</svg>
<div class="a" style="left:1720px;top:558px;width:197px;height:20px;background:#4d4d4d;border:1px solid #6a6a6a"></div>
<div class="t" style="left:1722px;top:562px;font-size:14px;letter-spacing:0.9px;color:#dcdcdc">Opacity</div>
<div class="t" style="left:1864px;top:562px;font-size:14px;letter-spacing:0.5px;color:#dcdcdc">100.0</div>
<div class="a" style="left:1904px;top:559px;width:1px;height:18px;background:#000"></div>
<div class="a" style="left:1905px;top:559px;width:11px;height:18px;background:#3a3a3a"></div>
<svg style="left:1906px;top:560px" width="9" height="15" viewBox="0 0 9 15"><path d="M1 5 L4.5 1.5 L8 5" fill="none" stroke="#666" stroke-width="1.3"/><path d="M1 10 L4.5 13.5 L8 10" fill="none" stroke="#ccc" stroke-width="1.3"/></svg>
<div class="t" style="left:1720px;top:583px;font-size:14px;letter-spacing:0.3px;color:#dcdcdc">Lock:</div>
<svg style="left:1760px;top:582px" width="70" height="18" viewBox="1760 582 70 18">
 <path d="M1775.5 584 L1768.5 594.5 L1765.5 592Z M1765.5 592.5 L1767.8 594.3 Q1766 597.5 1763 597 Q1765 595 1765.5 592.5Z" fill="#bebebe"/>
 <path d="M1792.5 584 L1795 586.5 H1793.3 V589.7 H1796.5 V588 L1799 590.5 L1796.5 593 V591.3 H1793.3 V594.5 H1795 L1792.5 597 L1790 594.5 H1691.7 V591.3 H1688.5 V593 L1686 590.5" fill="none"/>
 <path d="M1792.5 584 L1795 586.5 H1793.3 V589.7 H1796.5 V588 L1799 590.5 L1796.5 593 V591.3 H1793.3 V594.5 H1795 L1792.5 597 L1790 594.5 H1791.7 V591.3 H1788.5 V593 L1786 590.5 L1788.5 588 V589.7 H1791.7 V586.5 H1790 Z" fill="#bebebe"/>
 <rect x="1810" y="584" width="13" height="13" fill="#5a5a5a"/>
 <path d="M1810 584h3v3h-3zM1816 584h3v3h-3zM1813 587h3v3h-3zM1819 587h4v3h-4zM1810 590h3v3h-3zM1816 590h3v3h-3zM1813 593h3v4h-3zM1819 593h4v4h-4z" fill="#aaa"/>
</svg>
<div class="a" style="left:1721px;top:603px;width:196px;height:415px;background:#303030"></div>
<div class="a" style="left:1721px;top:603px;width:196px;height:26px;background:#454545;border:1px solid #3c3c3c"></div>
<div class="a" style="left:1748px;top:604px;width:1px;height:24px;background:#3a3a3a"></div>
<div class="a" style="left:1776px;top:604px;width:1px;height:24px;background:#3a3a3a"></div>
<svg style="left:1724px;top:608px" width="60" height="18" viewBox="1724 608 60 18">
 <path d="M1728 617 Q1734.5 609.5 1741 617 Q1734.5 624.5 1728 617Z" fill="none" stroke="#bebebe" stroke-width="1.3"/><circle cx="1734.5" cy="617" r="2.2" fill="#bebebe"/>
 <rect x="1759.7" y="611" width="5.8" height="8" rx="1.2" fill="none" stroke="#bebebe" stroke-width="1.6"/><path d="M1762.6 613 V617" stroke="#454545" stroke-width="1"/><path d="M1759.7 623.5 Q1759.7 619.5 1762.6 619.5 Q1765.5 619.5 1765.5 623.5" fill="none" stroke="#bebebe" stroke-width="1.6"/>
</svg>
<!-- active row -->
<div class="a" style="left:1721px;top:753px;width:196px;height:31px;background:#1e1e1e"></div>
<div class="a" style="left:1725px;top:757px;width:21px;height:23px;border:1px dotted #ddd"></div>
<svg style="left:1721px;top:629px" width="196" height="156" viewBox="1721 629 196 156">
 <defs>
  <pattern id="chk" x="1797" y="633" width="8" height="8" patternUnits="userSpaceOnUse"><rect width="8" height="8" fill="#666"/><rect width="4" height="4" fill="#999"/><rect x="4" y="4" width="4" height="4" fill="#999"/></pattern>
  <g id="eye"><path d="M-9.5 0 Q0 -9 9.5 0 Q0 9 -9.5 0Z" fill="#bebebe"/><path d="M-7 0 Q0 -6 7 0 Q0 6 -7 0Z" fill="#303030"/><circle r="3.3" fill="#bebebe"/></g>
 </defs>
 <rect x="1796" y="632" width="37" height="27" fill="#000"/><rect x="1798" y="634" width="33" height="23" fill="url(#chk)"/>
 <rect x="1812" y="637" width="18" height="9" fill="#2a2a2a"/><rect x="1813" y="639" width="15" height="4" fill="#7a2a20"/>
 <rect x="1796" y="663" width="37" height="27" fill="#000"/><rect x="1798" y="665" width="33" height="23" fill="url(#chk)"/>
 <rect x="1796" y="694" width="37" height="27" fill="#000"/><rect x="1798" y="696" width="33" height="23" fill="url(#chk)"/>
 <rect x="1796" y="725" width="37" height="27" fill="#000"/><rect x="1798" y="727" width="33" height="23" fill="url(#chk)"/>
 <rect x="1796" y="755" width="37" height="27" fill="#000"/><rect x="1798" y="757" width="33" height="23" fill="#f2f4f8"/><path d="M1806 762 V775 M1822 765 V777" stroke="#c8cacf" stroke-width="0.7"/>
 <use href="#eye" x="1735" y="676"/>
 <use href="#eye" x="1735" y="707"/>
 <use href="#eye" x="1735" y="738"/>
 <use href="#eye" x="1735" y="769"/>
</svg>
<div class="a" style="left:1836px;top:629px;width:81px;height:155px;overflow:hidden">
 <div class="t" style="left:0;top:9px;font-size:14px;letter-spacing:0.6px;color:#dcdcdc">Pasted Layer</div>
 <div class="t" style="left:0;top:40px;font-size:14px;letter-spacing:0.6px;color:#dcdcdc">Pasted Layer</div>
 <div class="t" style="left:0;top:71px;font-size:14px;letter-spacing:0.6px;color:#dcdcdc">Transformation</div>
 <div class="t" style="left:0;top:102px;font-size:14px;letter-spacing:0.6px;color:#dcdcdc">Pasted Layer</div>
 <div class="t" style="left:0;top:133px;font-size:14px;letter-spacing:1px;font-weight:bold;color:#fff">IMG_20250410</div>
</div>
<!-- layers h scrollbar -->
<div class="a" style="left:1720px;top:979px;width:197px;height:14px;background:#1f1f1f"></div>
<div class="a" style="left:1721px;top:980px;width:120px;height:12px;background:#5e5e5e;border-radius:2px"></div>
<svg style="left:1720px;top:996px" width="200" height="20" viewBox="1720 996 200 20">
 <path d="M1728 1001 H1734 L1737 1004 V1013 H1728Z" fill="none" stroke="#bebebe" stroke-width="1.3"/>
 <path d="M1730 998 V1003 M1727.5 1000.5 H1732.5" stroke="#bebebe" stroke-width="1.3"/>
 <path d="M1749 1000 H1754 L1756 1002 H1762 V1013 H1749Z" fill="#bebebe"/>
 <path d="M1755.5 1004 V1011 M1752 1007.5 H1759" stroke="#333" stroke-width="1.6"/>
 <path d="M1774 1010 L1779 1005 L1784 1010" fill="none" stroke="#bebebe" stroke-width="1.5"/>
 <path d="M1798 1005 L1803 1010 L1808 1005" fill="none" stroke="#bebebe" stroke-width="1.5"/>
 <rect x="1822.5" y="1002.5" width="6" height="5" fill="none" stroke="#bebebe" stroke-width="1.1"/>
 <path d="M1826 1009.5 H1833 V1005" fill="none" stroke="#bebebe" stroke-width="1.1"/>
 <path d="M1846 1003 H1852 M1845 1006 H1852 M1844 1009 H1852 M1846 1012 H1852" stroke="#bebebe" stroke-width="1.5"/>
 <path d="M1855 1002 V1011 M1853 1009 L1855 1012 L1857 1009" stroke="#bebebe" stroke-width="1.3" fill="none"/>
 <path d="M1870 1002 H1878 V1008 H1870Z" fill="#bebebe"/>
 <path d="M1868 1009 H1882 L1879 1013 H1866Z" fill="#bebebe"/>
 <rect x="1897" y="1000" width="13" height="13" fill="#bebebe"/>
 <path d="M1899.5 1002.5 L1907.5 1010.5 M1907.5 1002.5 L1899.5 1010.5" stroke="#333" stroke-width="2"/>
</svg>
<div class="a" style="left:188px;top:531px;width:2px;height:5px;background:#999"></div>
<div class="a" style="left:188px;top:538px;width:2px;height:4px;background:#999"></div>
<div class="a" style="left:188px;top:545px;width:2px;height:4px;background:#999"></div>
<div class="a" style="left:1715px;top:531px;width:2px;height:5px;background:#999"></div>
<div class="a" style="left:1715px;top:538px;width:2px;height:4px;background:#999"></div>
<div class="a" style="left:1715px;top:545px;width:2px;height:4px;background:#999"></div>
<!-- TASKBAR -->
<div class="a" style="left:0;top:1020px;width:1920px;height:60px;background:#1c1c1c;border-top:1px solid #262626"></div>
<svg style="left:556px;top:1034px" width="34" height="34" viewBox="556 1034 34 34">
 <defs><linearGradient id="wg" x1="0" y1="0" x2="1" y2="1"><stop offset="0" stop-color="#45c6f8"/><stop offset="1" stop-color="#2ab4f2"/></linearGradient></defs>
 <rect x="558" y="1037" width="13.5" height="13.5" fill="url(#wg)"/><rect x="573" y="1037" width="13.5" height="13.5" fill="url(#wg)"/>
 <rect x="558" y="1052" width="13.5" height="13.5" fill="url(#wg)"/><rect x="573" y="1052" width="13.5" height="13.5" fill="url(#wg)"/>
</svg>
<div class="a" style="left:603px;top:1030px;width:275px;height:40px;background:#353535;border-radius:20px;border:1px solid #444"></div>
<svg style="left:614px;top:1038px" width="26" height="26" viewBox="0 0 26 26"><circle cx="10.5" cy="10" r="7" fill="#4a4a4a" stroke="#e8e8e8" stroke-width="1.8"/><path d="M15.5 15.5 L21 21" stroke="#e8e8e8" stroke-width="2.2" stroke-linecap="round"/></svg>
<div class="t" style="left:649px;top:1042px;font-size:17px;letter-spacing:-0.4px;color:#d8d8d8">Search</div>
<!-- task view -->
<svg style="left:890px;top:1032px" width="40" height="36" viewBox="890 1032 40 36">
 <rect x="894" y="1043" width="20" height="20" rx="2" fill="#5a5a5a"/>
 <rect x="901" y="1036" width="23" height="21" rx="2" fill="#f0f0f0"/>
 <rect x="901" y="1043" width="13" height="14" fill="#a8a8a8"/>
</svg>
<!-- chrome -->
<svg style="left:947px;top:1033px" width="34" height="34" viewBox="947 1033 34 34">
 <circle cx="964" cy="1050" r="15" fill="#dd4535"/>
 <path d="M964 1050 L977 1042.5 A15 15 0 0 1 956.5 1063 Z" fill="#f6c031"/>
 <path d="M964 1050 L956.5 1063 A15 15 0 0 1 951 1042.5 Z" fill="#2a8d4a"/>
 <circle cx="964" cy="1050" r="6.8" fill="#fff"/><circle cx="964" cy="1050" r="5.5" fill="#3b82d8"/>
</svg>
<div class="a" style="left:960px;top:1071px;width:8px;height:3px;background:#9a9a9a;border-radius:2px"></div>
<!-- folder -->
<svg style="left:1002px;top:1034px" width="34" height="32" viewBox="1002 1034 34 32">
 <path d="M1004 1037 H1014 L1017 1040 H1034 V1063 H1004Z" fill="#e5a81e"/>
 <rect x="1004" y="1042" width="30" height="21" rx="1" fill="#f8c443"/>
 <rect x="1009" y="1054" width="20" height="8" rx="1" fill="#1f6fd0"/><rect x="1011" y="1056" width="16" height="4" fill="#5aa8ff"/>
</svg>
<div class="a" style="left:1015px;top:1071px;width:8px;height:3px;background:#9a9a9a;border-radius:2px"></div>
<!-- red app -->
<svg style="left:1060px;top:1034px" width="32" height="32" viewBox="1060 1034 32 32">
 <path d="M1064 1039 Q1076 1036 1089 1040" stroke="#6e2a1e" stroke-width="2.2" fill="none"/>
 <path d="M1071 1040 Q1074 1050 1067 1061 M1081 1040 Q1083 1050 1077 1060" stroke="#7a3426" stroke-width="4" fill="none" stroke-linecap="round"/><path d="M1069 1046 l1 1 M1071 1052 l1 1 M1079 1046 l1 1 M1080 1053 l1 1" stroke="#a0604a" stroke-width="1"/>
</svg>
<!-- OBS -->
<svg style="left:1112px;top:1034px" width="34" height="32" viewBox="1112 1034 34 32">
 <circle cx="1129" cy="1050" r="14" fill="#1c1c1c" stroke="#dcdcdc" stroke-width="1.8"/>
 <circle cx="1129" cy="1050" r="11.5" fill="#302e31"/>
 <path d="M1129 1050 Q1121 1048 1124 1041 Q1126 1045 1129 1045Z M1129 1050 Q1134 1056 1128 1060 Q1129 1055 1126 1053Z M1129 1050 Q1135 1044 1138 1051 Q1134 1049 1132 1052Z" fill="#dcdcdc"/>
 <circle cx="1129" cy="1050" r="2" fill="#302e31"/>
</svg>
<!-- calculator -->
<svg style="left:1170px;top:1034px" width="28" height="32" viewBox="1170 1034 28 32">
 <rect x="1172" y="1035" width="23" height="29" rx="2" fill="#5b6770"/>
 <rect x="1174" y="1037" width="19" height="5" fill="#4fc3f7"/>
 <g fill="#c8ced3"><rect x="1174" y="1044" width="5" height="4"/><rect x="1181" y="1044" width="5" height="4"/><rect x="1188" y="1044" width="5" height="4"/>
 <rect x="1174" y="1050" width="5" height="4"/><rect x="1181" y="1050" width="5" height="4"/>
 <rect x="1174" y="1056" width="5" height="5"/><rect x="1181" y="1056" width="5" height="5"/></g>
 <rect x="1188" y="1050" width="5" height="11" fill="#2c4a80"/>
</svg>
<!-- steam -->
<svg style="left:1222px;top:1034px" width="34" height="32" viewBox="1222 1034 34 32">
 <defs><linearGradient id="stg" x1="0" y1="0" x2="0" y2="1"><stop offset="0" stop-color="#1b2a6a"/><stop offset="1" stop-color="#1e72b8"/></linearGradient></defs>
 <circle cx="1239" cy="1050" r="14.5" fill="url(#stg)"/>
 <path d="M1225 1049 L1236 1054 L1233 1059 L1226 1056Z" fill="#fff"/>
 <circle cx="1242" cy="1046" r="5.5" fill="none" stroke="#fff" stroke-width="2.3"/>
 <circle cx="1235" cy="1055" r="3" fill="#fff"/>
</svg>
<div class="a" style="left:1235px;top:1071px;width:8px;height:3px;background:#9a9a9a;border-radius:2px"></div>
<!-- gimp active -->
<div class="a" style="left:1269px;top:1025px;width:50px;height:50px;background:#2e2e2e;border-radius:5px"></div>
<svg style="left:1277px;top:1034px" width="34" height="30" viewBox="1277 1034 34 30">
 <rect x="1279" y="1044" width="30" height="18" fill="#e8ebf1"/>
 <path d="M1287 1044 L1291 1037 L1296 1042 L1303 1036 L1308 1040 L1307 1052 L1301 1056 L1295 1054 L1289 1050Z" fill="#9a9a9a"/>
 <circle cx="1299" cy="1046" r="2" fill="#444"/><circle cx="1303" cy="1045" r="1.5" fill="#444"/>
</svg>
<div class="a" style="left:1284px;top:1071px;width:20px;height:3px;background:#4cc2ff;border-radius:2px"></div>
<!-- scanner -->
<svg style="left:1330px;top:1032px" width="36" height="36" viewBox="1330 1032 36 36">
 <path d="M1336 1036 H1358 L1356 1046 H1338Z" fill="#b8b8b8"/>
 <rect x="1336" y="1046" width="22" height="10" fill="#dfe8f0"/><rect x="1338" y="1048" width="18" height="3" fill="#5ab0e8"/>
 <rect x="1335" y="1056" width="24" height="4" fill="#9aa4ac"/>
 <rect x="1350" y="1048" width="14" height="17" fill="#f0f0f0" stroke="#888" stroke-width="0.6"/>
 <rect x="1352" y="1051" width="5" height="4" fill="#e24a2a"/><path d="M1352 1057h10M1352 1059h10M1352 1061h10" stroke="#999" stroke-width="0.8"/>
</svg>
<div class="a" style="left:1345px;top:1071px;width:8px;height:3px;background:#9a9a9a;border-radius:2px"></div>
<!-- tray -->
<svg style="left:1624px;top:1044px" width="18" height="11" viewBox="0 0 18 11"><path d="M2 9 L9 2 L16 9" fill="none" stroke="#f0f0f0" stroke-width="1.8"/></svg>
<div class="t" style="left:1666px;top:1044px;font-size:14px;letter-spacing:-0.3px;color:#f0f0f0">DEU</div>
<svg style="left:1716px;top:1040px" width="90" height="20" viewBox="1716 1040 90 20">
 <path d="M1718 1047 Q1728 1038 1738 1047" fill="none" stroke="#f0f0f0" stroke-width="1.6"/>
 <path d="M1721.5 1050.5 Q1728 1044.5 1734.5 1050.5" fill="none" stroke="#f0f0f0" stroke-width="1.6"/>
 <path d="M1725 1054 Q1728 1051 1731 1054" fill="none" stroke="#f0f0f0" stroke-width="1.6"/>
 <circle cx="1728" cy="1056" r="1.4" fill="#f0f0f0"/>
 <path d="M1749 1047 H1752 L1757 1042.5 V1057.5 L1752 1053 H1749Z" fill="none" stroke="#f0f0f0" stroke-width="1.4"/>
 <path d="M1760 1047 Q1762 1050 1760 1053 M1763 1044.5 Q1766 1050 1763 1055.5" fill="none" stroke="#f0f0f0" stroke-width="1.4"/>
 <path d="M1766 1043 Q1770 1050 1766 1057" fill="none" stroke="#777" stroke-width="1.2"/>
 <rect x="1779" y="1045" width="17" height="11" rx="2" fill="none" stroke="#f0f0f0" stroke-width="1.5"/>
 <rect x="1796" y="1048" width="2" height="5" fill="#f0f0f0"/>
 <path d="M1780 1054 L1786 1046 H1793 L1793 1054Z" fill="#f0f0f0"/>
 <path d="M1781 1041 L1779 1046 H1782 L1780 1050" fill="none" stroke="#f0f0f0" stroke-width="1.2"/>
</svg>
<div class="t" style="left:1860px;top:1034px;font-size:14px;color:#f0f0f0">16:49</div>
<div class="t" style="left:1819px;top:1053px;font-size:14px;letter-spacing:0.75px;color:#f0f0f0">10/04/2025</div>
</body></html>
